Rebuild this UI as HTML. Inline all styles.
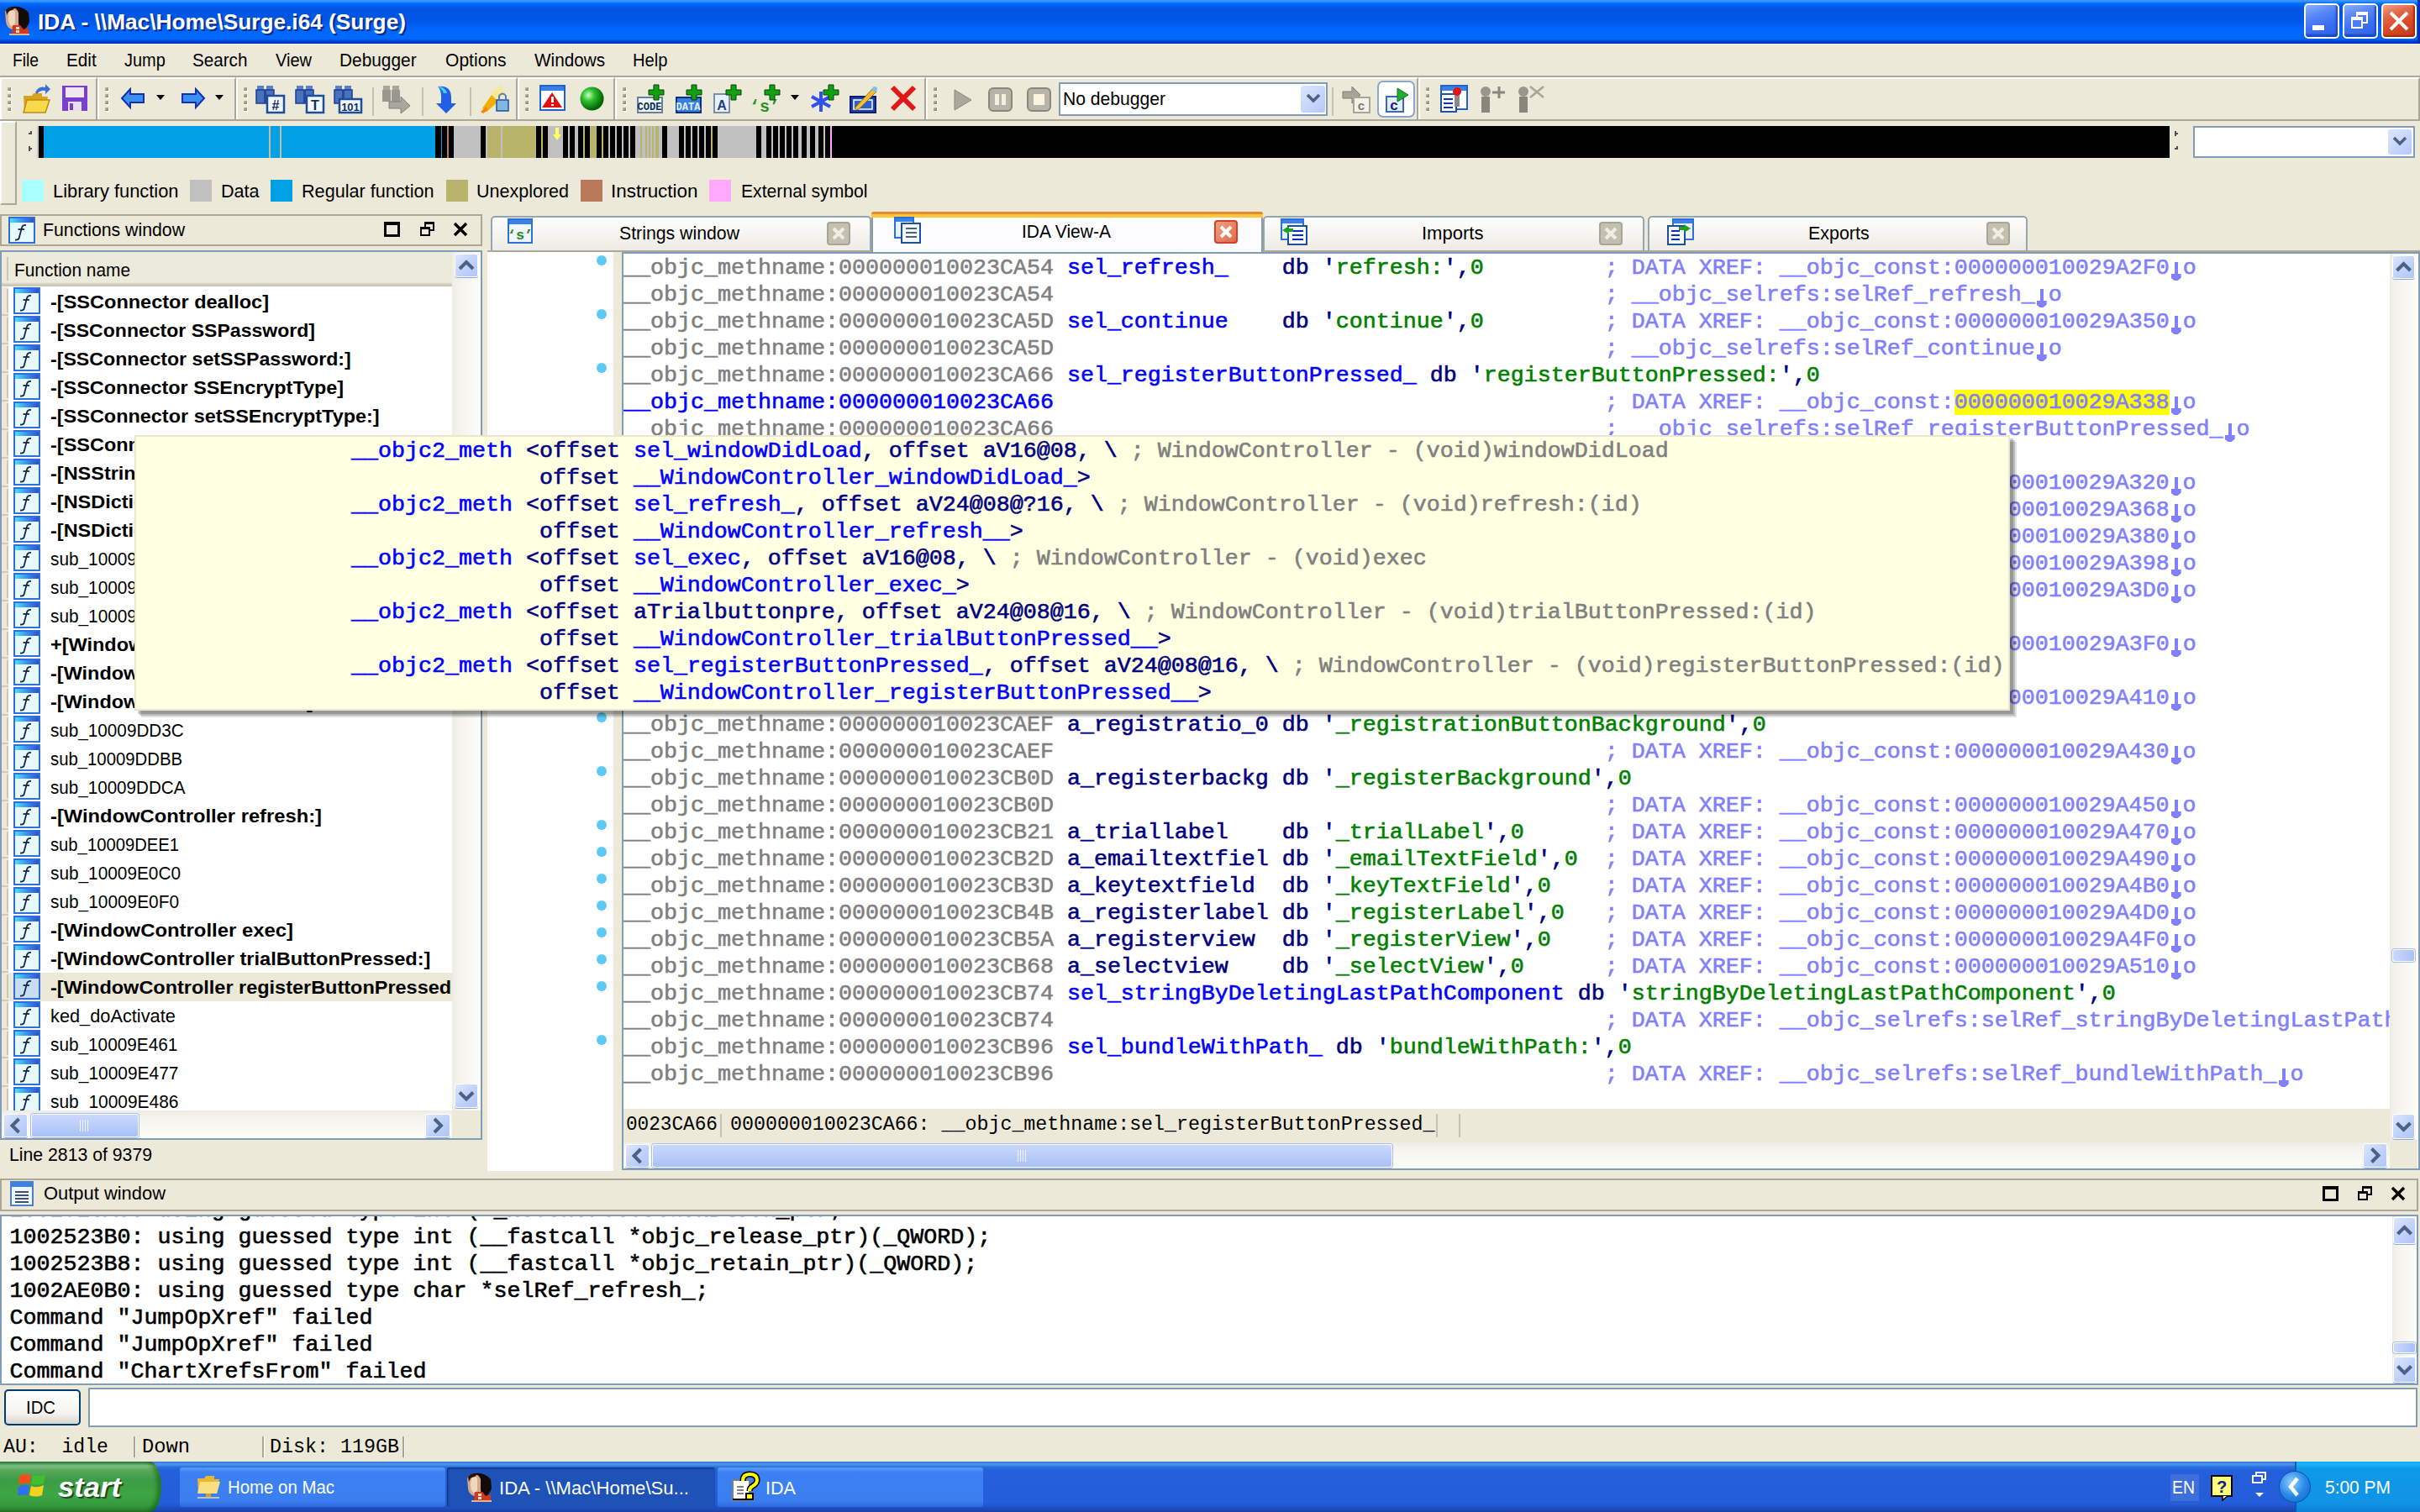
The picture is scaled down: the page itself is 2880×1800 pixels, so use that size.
<!DOCTYPE html><html><head><meta charset="utf-8"><style>
*{margin:0;padding:0;box-sizing:border-box}
html,body{width:2880px;height:1800px;overflow:hidden;background:#ECE9D8;font-family:"Liberation Sans",sans-serif;position:relative}
.a{position:absolute}
.t{position:absolute;white-space:pre;font-family:"Liberation Sans",sans-serif;font-size:22px;line-height:26px;color:#000;transform-origin:0 0}
.m{position:absolute;white-space:pre;font-family:"Liberation Mono",monospace;font-weight:normal;-webkit-text-stroke:0.6px currentColor;font-size:26.667px;line-height:32px;color:#000}
.g{color:#808080}.b{color:#0000FF}.n{color:#000080}.s{color:#008000}.x{color:#8080FF}.k{color:#000}
.hl{background:#FFFF00}
.dn{position:relative}
.dn::before{content:"";position:absolute;left:6px;top:8px;width:4px;height:15px;background:currentColor}
.dn::after{content:"";position:absolute;left:2px;top:22px;width:12px;height:8px;background:currentColor;clip-path:polygon(0 0,100% 0,100% 60%,67% 100%,33% 100%,0 60%)}
svg{position:absolute;overflow:visible}
</style></head><body><div class="a" style="left:0px;top:0px;width:2880px;height:52px;background:linear-gradient(to bottom,#4499FF 0px,#2E8BFF 2px,#006CFF 4px,#0060EC 7px,#0056E2 10px,#0055E3 20px,#005AED 28px,#0064FC 33px,#0068FF 40px,#006AFF 46px,#0050E0 48px,#0030C8 51px)"></div>
<div class="a" style="left:0px;top:52px;width:2880px;height:1px;background:#FFF5DC"></div>
<svg style="left:2px;top:6px" width="34" height="36" viewBox="0 0 34 36">
<path d="M7 4 Q12 1 20 2 Q28 4 32 9 L33 20 Q31 26 26 30 L22 31 L20 20 Z" fill="#140a06"/>
<path d="M4 8 Q6 4 12 3 Q18 3 20 9 L20 24 Q18 29 12 29 Q6 27 5 20 Z" fill="#d4a888"/>
<path d="M9 6 Q13 4 16 8 L16 22 Q14 26 11 25 Q8 22 8 15 Z" fill="#efd8c0"/>
<path d="M5 6 Q9 2 16 3 L13 6 Q8 6 6 12 Z" fill="#2a1408"/>
<path d="M13 24 L22 24 L26 29 L32 27 L32 35 L12 35 Z" fill="#d03820"/>
<rect x="17" y="26" width="4" height="3" fill="#f0e0d0"/><rect x="17" y="30" width="4" height="3" fill="#f0e0d0"/>
<rect x="9" y="34" width="24" height="2" fill="#e0b888"/>
</svg>
<div id="t0" class="t" style="left:45px;top:10.89px;font-size:26px;line-height:31.2px;font-weight:700;color:#fff;font-family:'Liberation Sans',sans-serif;transform:scaleX(1.0094);text-shadow:2px 2px 0 #0a2a8a">IDA - \\Mac\Home\Surge.i64 (Surge)</div>
<div class="a" style="left:2742px;top:4px;width:42px;height:42px;background:linear-gradient(160deg,#90B0FF 0%,#5A88F8 30%,#3C70F2 60%,#2E62E8 100%);border:2px solid #fff;border-radius:5px;box-shadow:inset -2px -3px 2px #1A48C0"></div>
<div class="a" style="left:2752px;top:30px;width:14px;height:6px;background:#fff"></div>
<div class="a" style="left:2788px;top:4px;width:42px;height:42px;background:linear-gradient(160deg,#90B0FF 0%,#5A88F8 30%,#3C70F2 60%,#2E62E8 100%);border:2px solid #fff;border-radius:5px;box-shadow:inset -2px -3px 2px #1A48C0"></div>
<div class="a" style="left:2804px;top:14px;width:14px;height:14px;border:2px solid #fff;border-top-width:4px"></div>
<div class="a" style="left:2798px;top:20px;width:14px;height:14px;border:2px solid #fff;border-top-width:4px;background:#4A7CF4"></div>
<div class="a" style="left:2834px;top:4px;width:42px;height:42px;background:linear-gradient(160deg,#F0A088 0%,#E06848 30%,#D84A28 60%,#C03A18 100%);border:2px solid #fff;border-radius:5px;box-shadow:inset -2px -2px 2px #A02A08"></div>
<svg style="left:2834px;top:4px" width="42" height="42" viewBox="0 0 42 42"><path d="M11 11 L31 31 M31 11 L11 31" stroke="#fff" stroke-width="4"/></svg>
<div class="a" style="left:2877px;top:0px;width:3px;height:52px;background:#0030B0"></div>
<div id="t1" class="t" style="left:15px;top:59.18px;font-size:22px;line-height:26.4px;font-weight:400;color:#000;font-family:'Liberation Sans',sans-serif;transform:scaleX(0.8744);">File</div>
<div id="t2" class="t" style="left:78.6px;top:59.18px;font-size:22px;line-height:26.4px;font-weight:400;color:#000;font-family:'Liberation Sans',sans-serif;transform:scaleX(0.9414);">Edit</div>
<div id="t3" class="t" style="left:147.6px;top:59.18px;font-size:22px;line-height:26.4px;font-weight:400;color:#000;font-family:'Liberation Sans',sans-serif;transform:scaleX(0.9071);">Jump</div>
<div id="t4" class="t" style="left:229px;top:59.18px;font-size:22px;line-height:26.4px;font-weight:400;color:#000;font-family:'Liberation Sans',sans-serif;transform:scaleX(0.9381);">Search</div>
<div id="t5" class="t" style="left:328px;top:59.18px;font-size:22px;line-height:26.4px;font-weight:400;color:#000;font-family:'Liberation Sans',sans-serif;transform:scaleX(0.9092);">View</div>
<div id="t6" class="t" style="left:403.6px;top:59.18px;font-size:22px;line-height:26.4px;font-weight:400;color:#000;font-family:'Liberation Sans',sans-serif;transform:scaleX(0.9478);">Debugger</div>
<div id="t7" class="t" style="left:529.8px;top:59.18px;font-size:22px;line-height:26.4px;font-weight:400;color:#000;font-family:'Liberation Sans',sans-serif;transform:scaleX(0.9574);">Options</div>
<div id="t8" class="t" style="left:636px;top:59.18px;font-size:22px;line-height:26.4px;font-weight:400;color:#000;font-family:'Liberation Sans',sans-serif;transform:scaleX(0.9412);">Windows</div>
<div id="t9" class="t" style="left:753px;top:59.18px;font-size:22px;line-height:26.4px;font-weight:400;color:#000;font-family:'Liberation Sans',sans-serif;transform:scaleX(0.9149);">Help</div>
<div class="a" style="left:0px;top:90px;width:2880px;height:2px;background:#ACA899"></div>
<div class="a" style="left:0px;top:92px;width:116px;height:50px;border-top:2px solid #fff;border-left:2px solid #fff;border-right:2px solid #ACA899"></div>
<div class="a" style="left:116px;top:92px;width:165px;height:50px;border-top:2px solid #fff;border-left:2px solid #fff;border-right:2px solid #ACA899"></div>
<div class="a" style="left:281px;top:92px;width:335px;height:50px;border-top:2px solid #fff;border-left:2px solid #fff;border-right:2px solid #ACA899"></div>
<div class="a" style="left:616px;top:92px;width:116px;height:50px;border-top:2px solid #fff;border-left:2px solid #fff;border-right:2px solid #ACA899"></div>
<div class="a" style="left:732px;top:92px;width:370px;height:50px;border-top:2px solid #fff;border-left:2px solid #fff;border-right:2px solid #ACA899"></div>
<div class="a" style="left:1102px;top:92px;width:586px;height:50px;border-top:2px solid #fff;border-left:2px solid #fff;border-right:2px solid #ACA899"></div>
<div class="a" style="left:1688px;top:92px;width:1192px;height:50px;border-top:2px solid #fff;border-left:2px solid #fff;border-right:2px solid #ACA899"></div>
<div class="a" style="left:0px;top:142px;width:2880px;height:2px;background:#ACA899"></div>
<div class="a" style="left:9px;top:104px;width:4px;height:4px;background:linear-gradient(135deg,#C8C4B4,#7E7A66);box-shadow:1px 1px 0 #fff"></div>
<div class="a" style="left:9px;top:112px;width:4px;height:4px;background:linear-gradient(135deg,#C8C4B4,#7E7A66);box-shadow:1px 1px 0 #fff"></div>
<div class="a" style="left:9px;top:120px;width:4px;height:4px;background:linear-gradient(135deg,#C8C4B4,#7E7A66);box-shadow:1px 1px 0 #fff"></div>
<div class="a" style="left:9px;top:128px;width:4px;height:4px;background:linear-gradient(135deg,#C8C4B4,#7E7A66);box-shadow:1px 1px 0 #fff"></div>
<div class="a" style="left:125px;top:104px;width:4px;height:4px;background:linear-gradient(135deg,#C8C4B4,#7E7A66);box-shadow:1px 1px 0 #fff"></div>
<div class="a" style="left:125px;top:112px;width:4px;height:4px;background:linear-gradient(135deg,#C8C4B4,#7E7A66);box-shadow:1px 1px 0 #fff"></div>
<div class="a" style="left:125px;top:120px;width:4px;height:4px;background:linear-gradient(135deg,#C8C4B4,#7E7A66);box-shadow:1px 1px 0 #fff"></div>
<div class="a" style="left:125px;top:128px;width:4px;height:4px;background:linear-gradient(135deg,#C8C4B4,#7E7A66);box-shadow:1px 1px 0 #fff"></div>
<div class="a" style="left:290px;top:104px;width:4px;height:4px;background:linear-gradient(135deg,#C8C4B4,#7E7A66);box-shadow:1px 1px 0 #fff"></div>
<div class="a" style="left:290px;top:112px;width:4px;height:4px;background:linear-gradient(135deg,#C8C4B4,#7E7A66);box-shadow:1px 1px 0 #fff"></div>
<div class="a" style="left:290px;top:120px;width:4px;height:4px;background:linear-gradient(135deg,#C8C4B4,#7E7A66);box-shadow:1px 1px 0 #fff"></div>
<div class="a" style="left:290px;top:128px;width:4px;height:4px;background:linear-gradient(135deg,#C8C4B4,#7E7A66);box-shadow:1px 1px 0 #fff"></div>
<div class="a" style="left:625px;top:104px;width:4px;height:4px;background:linear-gradient(135deg,#C8C4B4,#7E7A66);box-shadow:1px 1px 0 #fff"></div>
<div class="a" style="left:625px;top:112px;width:4px;height:4px;background:linear-gradient(135deg,#C8C4B4,#7E7A66);box-shadow:1px 1px 0 #fff"></div>
<div class="a" style="left:625px;top:120px;width:4px;height:4px;background:linear-gradient(135deg,#C8C4B4,#7E7A66);box-shadow:1px 1px 0 #fff"></div>
<div class="a" style="left:625px;top:128px;width:4px;height:4px;background:linear-gradient(135deg,#C8C4B4,#7E7A66);box-shadow:1px 1px 0 #fff"></div>
<div class="a" style="left:741px;top:104px;width:4px;height:4px;background:linear-gradient(135deg,#C8C4B4,#7E7A66);box-shadow:1px 1px 0 #fff"></div>
<div class="a" style="left:741px;top:112px;width:4px;height:4px;background:linear-gradient(135deg,#C8C4B4,#7E7A66);box-shadow:1px 1px 0 #fff"></div>
<div class="a" style="left:741px;top:120px;width:4px;height:4px;background:linear-gradient(135deg,#C8C4B4,#7E7A66);box-shadow:1px 1px 0 #fff"></div>
<div class="a" style="left:741px;top:128px;width:4px;height:4px;background:linear-gradient(135deg,#C8C4B4,#7E7A66);box-shadow:1px 1px 0 #fff"></div>
<div class="a" style="left:1111px;top:104px;width:4px;height:4px;background:linear-gradient(135deg,#C8C4B4,#7E7A66);box-shadow:1px 1px 0 #fff"></div>
<div class="a" style="left:1111px;top:112px;width:4px;height:4px;background:linear-gradient(135deg,#C8C4B4,#7E7A66);box-shadow:1px 1px 0 #fff"></div>
<div class="a" style="left:1111px;top:120px;width:4px;height:4px;background:linear-gradient(135deg,#C8C4B4,#7E7A66);box-shadow:1px 1px 0 #fff"></div>
<div class="a" style="left:1111px;top:128px;width:4px;height:4px;background:linear-gradient(135deg,#C8C4B4,#7E7A66);box-shadow:1px 1px 0 #fff"></div>
<div class="a" style="left:1697px;top:104px;width:4px;height:4px;background:linear-gradient(135deg,#C8C4B4,#7E7A66);box-shadow:1px 1px 0 #fff"></div>
<div class="a" style="left:1697px;top:112px;width:4px;height:4px;background:linear-gradient(135deg,#C8C4B4,#7E7A66);box-shadow:1px 1px 0 #fff"></div>
<div class="a" style="left:1697px;top:120px;width:4px;height:4px;background:linear-gradient(135deg,#C8C4B4,#7E7A66);box-shadow:1px 1px 0 #fff"></div>
<div class="a" style="left:1697px;top:128px;width:4px;height:4px;background:linear-gradient(135deg,#C8C4B4,#7E7A66);box-shadow:1px 1px 0 #fff"></div>
<div class="a" style="left:443px;top:104px;width:2px;height:34px;background:#C5C2B2"></div>
<div class="a" style="left:502px;top:104px;width:2px;height:34px;background:#C5C2B2"></div>
<div class="a" style="left:559px;top:104px;width:2px;height:34px;background:#C5C2B2"></div>
<div class="a" style="left:1585px;top:104px;width:2px;height:34px;background:#C5C2B2"></div>
<svg style="left:26px;top:100px" width="34" height="36" viewBox="0 0 34 36"><path d="M2 14 L12 14 L14 11 L24 11 L24 15 L31 15 L27 34 L3 34 Z" fill="#D9A21F"/>
<path d="M6 19 L33 19 L28 34 L2 34 Z" fill="#F7D94A" stroke="#C08A10" stroke-width="1.5"/>
<path d="M16 10 Q20 2 28 4 L28 0 L34 6 L28 12 L28 8 Q22 7 18 12 Z" fill="#3D6FD8"/></svg>
<svg style="left:73px;top:101px" width="32" height="32" viewBox="0 0 32 32"><rect x="1" y="1" width="30" height="30" fill="#7A3FCF"/>
<rect x="5" y="3" width="22" height="12" fill="#F0E8F0"/><rect x="8" y="20" width="16" height="11" fill="#E6E0F0"/><rect x="10" y="22" width="4" height="8" fill="#7A3FCF"/></svg>
<svg style="left:144px;top:104px" width="28" height="26" viewBox="0 0 28 26"><path d="M1 13 L11 2 L11 8 L27 8 L27 18 L11 18 L11 24 Z" fill="#3A8FF0" stroke="#1030B0" stroke-width="2"/></svg>
<svg style="left:186px;top:113px" width="10" height="6" viewBox="0 0 10 6"><path d="M0 0 L10 0 L5 6 Z" fill="#000"/></svg>
<svg style="left:256px;top:113px" width="10" height="6" viewBox="0 0 10 6"><path d="M0 0 L10 0 L5 6 Z" fill="#000"/></svg>
<svg style="left:941px;top:113px" width="10" height="6" viewBox="0 0 10 6"><path d="M0 0 L10 0 L5 6 Z" fill="#000"/></svg>
<svg style="left:216px;top:104px" width="28" height="26" viewBox="0 0 28 26"><path d="M27 13 L17 2 L17 8 L1 8 L1 18 L17 18 L17 24 Z" fill="#3A8FF0" stroke="#1030B0" stroke-width="2"/></svg>
<svg style="left:305px;top:101px" width="34" height="34" viewBox="0 0 34 34"><rect x="1" y="1" width="8" height="6" fill="#5A80C8"/><rect x="12" y="1" width="8" height="6" fill="#5A80C8"/>
<rect x="0" y="6" width="10" height="16" fill="#4A70C0" stroke="#1D3E8A" stroke-width="1.5"/><rect x="11" y="6" width="10" height="16" fill="#4A70C0" stroke="#1D3E8A" stroke-width="1.5"/><rect x="13" y="13" width="20" height="20" fill="#F4F8FF" stroke="#1D4E9A" stroke-width="2.5"/><text x="23" y="30" font-family="Liberation Sans" font-weight="bold" font-size="16" text-anchor="middle" fill="#12305A">#</text></svg>
<svg style="left:352px;top:101px" width="34" height="34" viewBox="0 0 34 34"><rect x="1" y="1" width="8" height="6" fill="#5A80C8"/><rect x="12" y="1" width="8" height="6" fill="#5A80C8"/>
<rect x="0" y="6" width="10" height="16" fill="#4A70C0" stroke="#1D3E8A" stroke-width="1.5"/><rect x="11" y="6" width="10" height="16" fill="#4A70C0" stroke="#1D3E8A" stroke-width="1.5"/><rect x="13" y="13" width="20" height="20" fill="#F4F8FF" stroke="#1D4E9A" stroke-width="2.5"/><text x="23" y="30" font-family="Liberation Sans" font-weight="bold" font-size="16" text-anchor="middle" fill="#12305A">T</text></svg>
<svg style="left:398px;top:101px" width="34" height="34" viewBox="0 0 34 34"><rect x="1" y="1" width="8" height="6" fill="#5A80C8"/><rect x="12" y="1" width="8" height="6" fill="#5A80C8"/>
<rect x="0" y="6" width="10" height="16" fill="#4A70C0" stroke="#1D3E8A" stroke-width="1.5"/><rect x="11" y="6" width="10" height="16" fill="#4A70C0" stroke="#1D3E8A" stroke-width="1.5"/><rect x="6" y="17" width="26" height="16" fill="#F4F8FF" stroke="#1D4E9A" stroke-width="2.5"/><text x="19" y="31" font-family="Liberation Sans" font-weight="bold" font-size="13" text-anchor="middle" fill="#12305A">101</text></svg>
<svg style="left:455px;top:101px" width="34" height="34" viewBox="0 0 34 34"><rect x="1" y="1" width="8" height="6" fill="#A8A8A0"/><rect x="12" y="1" width="8" height="6" fill="#A8A8A0"/>
<rect x="0" y="6" width="10" height="14" fill="#989890"/><rect x="11" y="6" width="10" height="14" fill="#989890"/>
<path d="M8 20 L22 20 L22 14 L33 25 L22 34 L22 28 L8 28 Z" fill="#A8A8A0" stroke="#808078" stroke-width="1"/></svg>
<svg style="left:518px;top:101px" width="26" height="34" viewBox="0 0 26 34"><path d="M3 2 Q18 0 19 14 L19 22 L25 22 L13 34 L1 22 L7 22 L7 14 Q7 6 3 2 Z" fill="#2060E8"/>
<path d="M3 2 Q12 2 14 10 L10 10 Q8 5 3 2 Z" fill="#40D0FF"/></svg>
<svg style="left:571px;top:101px" width="36" height="34" viewBox="0 0 36 34"><path d="M14 8 L26 0 L30 10 L14 24 Z" fill="#F8E890" opacity="0.8"/>
<path d="M3 28 L14 12 L22 20 L8 32 Z" fill="#F0B000"/><path d="M1 32 L8 26 L10 30 L4 34 Z" fill="#FF8000"/>
<rect x="20" y="18" width="14" height="13" fill="#80B8E0" stroke="#2050A0" stroke-width="1.5"/><path d="M23 18 L23 13 Q27 8 31 13 L31 18" stroke="#5080B0" stroke-width="2" fill="none"/></svg>
<svg style="left:642px;top:101px" width="31" height="31" viewBox="0 0 31 31"><rect x="1" y="1" width="29" height="29" fill="#fff" stroke="#2060D0" stroke-width="2"/><rect x="2" y="2" width="27" height="5" fill="#3A80E8"/>
<path d="M15 9 L27 27 L3 27 Z" fill="#E01010"/><rect x="14" y="14" width="3" height="7" fill="#fff"/><rect x="14" y="23" width="3" height="2" fill="#fff"/></svg>
<svg style="left:690px;top:103px" width="29" height="29" viewBox="0 0 29 29"><defs><radialGradient id="gb" cx="35%" cy="35%" r="65%"><stop offset="0" stop-color="#C8FFC0"/><stop offset="0.4" stop-color="#30C030"/><stop offset="1" stop-color="#006000"/></radialGradient></defs><circle cx="14.5" cy="14.5" r="14" fill="url(#gb)"/></svg>
<svg style="left:758px;top:115px" width="31" height="20" viewBox="0 0 31 20"><rect x="1" y="1" width="29" height="18" fill="#F0F4FF" stroke="#6A7FA0" stroke-width="2"/><text x="15" y="16" font-family="Liberation Mono" font-weight="bold" font-size="12" text-anchor="middle" fill="#06304A">CODE</text></svg>
<svg style="left:772px;top:101px" width="18" height="18" viewBox="0 0 18 18"><path d="M6 0 H12 V6 H18 V12 H12 V18 H6 V12 H0 V6 H6 Z" fill="#10A010" stroke="#064006" stroke-width="1"/></svg>
<svg style="left:804px;top:115px" width="31" height="20" viewBox="0 0 31 20"><rect x="1" y="1" width="29" height="18" fill="#3A7FE0" stroke="#0A3080" stroke-width="2"/><text x="15" y="16" font-family="Liberation Mono" font-weight="bold" font-size="12" text-anchor="middle" fill="#E0F0FF">DATA</text></svg>
<svg style="left:817px;top:101px" width="18" height="18" viewBox="0 0 18 18"><path d="M6 0 H12 V6 H18 V12 H12 V18 H6 V12 H0 V6 H6 Z" fill="#10A010" stroke="#064006" stroke-width="1"/></svg>
<svg style="left:849px;top:111px" width="20" height="24" viewBox="0 0 20 24"><rect x="1" y="1" width="18" height="22" fill="#E8F0FF" stroke="#7A8FA8" stroke-width="2"/><text x="10" y="20" font-family="Liberation Sans" font-weight="bold" font-size="16" text-anchor="middle" fill="#20407A">A</text></svg>
<svg style="left:864px;top:101px" width="18" height="18" viewBox="0 0 18 18"><path d="M6 0 H12 V6 H18 V12 H12 V18 H6 V12 H0 V6 H6 Z" fill="#10A010" stroke="#064006" stroke-width="1"/></svg>
<svg style="left:895px;top:113px" width="30" height="22" viewBox="0 0 30 22"><text x="15" y="20" font-family="Liberation Mono" font-weight="bold" font-size="20" text-anchor="middle" fill="#309020">‘s’</text></svg>
<svg style="left:910px;top:101px" width="18" height="18" viewBox="0 0 18 18"><path d="M6 0 H12 V6 H18 V12 H12 V18 H6 V12 H0 V6 H6 Z" fill="#10A010" stroke="#064006" stroke-width="1"/></svg>
<svg style="left:966px;top:109px" width="22" height="24" viewBox="0 0 22 24"><path d="M11 0 V24 M0 6 L22 18 M22 6 L0 18" stroke="#3050F0" stroke-width="4"/></svg>
<svg style="left:980px;top:101px" width="18" height="18" viewBox="0 0 18 18"><path d="M6 0 H12 V6 H18 V12 H12 V18 H6 V12 H0 V6 H6 Z" fill="#10A010" stroke="#064006" stroke-width="1"/></svg>
<svg style="left:1011px;top:101px" width="34" height="34" viewBox="0 0 34 34"><rect x="1" y="14" width="30" height="19" fill="#2040B0" stroke="#0A2070" stroke-width="2"/><rect x="5" y="18" width="22" height="11" fill="#3060D0" stroke="#fff" stroke-width="1.5"/><path d="M6 28 L28 4 L32 8 L10 30 Z" fill="#F0C030" stroke="#A07010" stroke-width="1"/><circle cx="30" cy="5" r="3" fill="#80C0F0"/></svg>
<svg style="left:1059px;top:101px" width="32" height="32" viewBox="0 0 32 32"><path d="M3 3 L29 29 M29 3 L3 29" stroke="#E01818" stroke-width="6"/></svg>
<svg style="left:1135px;top:106px" width="22" height="26" viewBox="0 0 22 26"><path d="M1 1 L21 13 L1 25 Z" fill="#ACA899" stroke="#8A877A" stroke-width="1"/></svg>
<svg style="left:1176px;top:104px" width="29" height="29" viewBox="0 0 29 29"><rect x="1" y="1" width="27" height="27" rx="5" fill="#B8B5A8" stroke="#8A877A" stroke-width="2"/><rect x="8" y="8" width="5" height="13" fill="#F4F0E0"/><rect x="16" y="8" width="5" height="13" fill="#F4F0E0"/></svg>
<svg style="left:1222px;top:104px" width="29" height="29" viewBox="0 0 29 29"><rect x="1" y="1" width="27" height="27" rx="5" fill="#B8B5A8" stroke="#8A877A" stroke-width="2"/><rect x="8" y="8" width="13" height="13" fill="#F8F4E0"/></svg>
<div class="a" style="left:1260px;top:98px;width:320px;height:40px;background:#fff;border:2px solid #7F9DB9"></div>
<div class="a" style="left:1548px;top:102px;width:29px;height:32px;background:linear-gradient(135deg,#DCE6FE,#B4C8F8);border-radius:3px"></div>
<svg style="left:1555px;top:110px" width="16" height="14" viewBox="0 0 16 14"><path d="M1 3 L8 10 L15 3" stroke="#4D6185" stroke-width="3.5" fill="none"/></svg>
<div id="t10" class="t" style="left:1265px;top:105.18px;font-size:22px;line-height:26.4px;font-weight:400;color:#000;font-family:'Liberation Sans',sans-serif;transform:scaleX(0.9590);">No debugger</div>
<svg style="left:1597px;top:101px" width="34" height="34" viewBox="0 0 34 34"><path d="M1 8 L12 8 L12 2 L22 12 L12 22 L12 16 L1 16 Z" fill="#A8A598" stroke="#807D70" stroke-width="1"/><rect x="14" y="15" width="19" height="18" fill="#F4F2E8" stroke="#A8A598" stroke-width="2"/><text x="23" y="30" font-family="Liberation Sans" font-weight="bold" font-size="15" text-anchor="middle" fill="#807D70">c</text></svg>
<div class="a" style="left:1639px;top:96px;width:45px;height:44px;background:#fff;border:2px solid #8CA8CC;border-radius:7px"></div>
<svg style="left:1648px;top:103px" width="30" height="32" viewBox="0 0 30 32"><rect x="2" y="12" width="20" height="18" fill="#E4EEFF" stroke="#3C6AB0" stroke-width="2"/><text x="11" y="28" font-family="Liberation Sans" font-weight="bold" font-size="17" text-anchor="middle" fill="#102080">c</text><path d="M15 2 L28 10 L15 18 Z" fill="#20B030" stroke="#107020" stroke-width="1"/></svg>
<svg style="left:1714px;top:101px" width="33" height="33" viewBox="0 0 33 33"><rect x="1" y="1" width="31" height="28" fill="#fff" stroke="#2060D0" stroke-width="2"/><rect x="2" y="2" width="29" height="5" fill="#3A80E8"/><rect x="1" y="11" width="18" height="21" fill="#fff" stroke="#2050A0" stroke-width="2"/><path d="M4 17 H15 M4 22 H15 M4 27 H15" stroke="#1030C0" stroke-width="2"/><rect x="17" y="12" width="6" height="14" fill="#8A8A8A"/><circle cx="20" cy="8" r="5" fill="#E81010"/></svg>
<svg style="left:1760px;top:101px" width="32" height="33" viewBox="0 0 32 33"><rect x="2" y="2" width="12" height="12" rx="6" fill="#9A978A"/><rect x="3" y="14" width="10" height="19" fill="#8A877A"/><path d="M16 9 H31 M24 2 V16" stroke="#8A877A" stroke-width="3"/></svg>
<svg style="left:1805px;top:101px" width="34" height="33" viewBox="0 0 34 33"><rect x="2" y="2" width="12" height="12" rx="6" fill="#9A978A"/><rect x="3" y="14" width="10" height="19" fill="#8A877A"/><path d="M16 2 L32 15 M32 2 L16 15" stroke="#A8A598" stroke-width="2.5"/></svg>
<div class="a" style="left:0px;top:144px;width:20px;height:100px;border-top:2px solid #fff;border-left:2px solid #fff;border-right:2px solid #ACA899;border-bottom:2px solid #ACA899"></div>
<svg style="left:34px;top:156px" width="4" height="4" viewBox="0 0 4 4"><path d="M2 0 H4 V4 H0 V2 H2 Z" fill="#505050"/></svg>
<svg style="left:34px;top:174px" width="4" height="6" viewBox="0 0 4 6"><path d="M0 0 H2 V2 H4 V4 H2 V6 H0 Z" fill="#505050"/></svg>
<svg style="left:2588px;top:156px" width="4" height="6" viewBox="0 0 4 6"><path d="M0 0 H2 V2 H4 V4 H2 V6 H0 Z" fill="#505050"/></svg>
<svg style="left:2588px;top:174px" width="4" height="4" viewBox="0 0 4 4"><path d="M2 0 H4 V4 H0 V2 H2 Z" fill="#505050"/></svg>
<div class="a" style="left:44px;top:150px;width:1.5px;height:38px;background:#C8C8C8"></div>
<div class="a" style="left:45.5px;top:150px;width:6.5px;height:38px;background:#000"></div>
<div class="a" style="left:52px;top:150px;width:268px;height:38px;background:#00A0E6"></div>
<div class="a" style="left:320px;top:150px;width:2px;height:38px;background:#C8B8A0"></div>
<div class="a" style="left:322px;top:150px;width:11px;height:38px;background:#00A0E6"></div>
<div class="a" style="left:333px;top:150px;width:2px;height:38px;background:#C8B8A0"></div>
<div class="a" style="left:335px;top:150px;width:183px;height:38px;background:#00A0E6"></div>
<div class="a" style="left:518px;top:150px;width:6.6px;height:38px;background:#000"></div>
<div class="a" style="left:524.6px;top:150px;width:1.4px;height:38px;background:#00A0E6"></div>
<div class="a" style="left:526px;top:150px;width:6px;height:38px;background:#000"></div>
<div class="a" style="left:532px;top:150px;width:2px;height:38px;background:#B87A5A"></div>
<div class="a" style="left:534px;top:150px;width:6px;height:38px;background:#000"></div>
<div class="a" style="left:540px;top:150px;width:32px;height:38px;background:#C0C0C0"></div>
<div class="a" style="left:572px;top:150px;width:6px;height:38px;background:#000"></div>
<div class="a" style="left:578px;top:150px;width:2px;height:38px;background:#C0C0C0"></div>
<div class="a" style="left:580px;top:150px;width:16px;height:38px;background:#B8B46C"></div>
<div class="a" style="left:596px;top:150px;width:2px;height:38px;background:#C0C0C0"></div>
<div class="a" style="left:598px;top:150px;width:40px;height:38px;background:#B8B46C"></div>
<div class="a" style="left:638px;top:150px;width:6px;height:38px;background:#000"></div>
<div class="a" style="left:644px;top:150px;width:2px;height:38px;background:#B8B46C"></div>
<div class="a" style="left:646px;top:150px;width:6px;height:38px;background:#000"></div>
<div class="a" style="left:652px;top:150px;width:18px;height:38px;background:#C0C0C0"></div>
<div class="a" style="left:670px;top:150px;width:6px;height:38px;background:#000"></div>
<div class="a" style="left:676px;top:150px;width:2px;height:38px;background:#C0C0C0"></div>
<div class="a" style="left:678px;top:150px;width:6px;height:38px;background:#000"></div>
<div class="a" style="left:684px;top:150px;width:4px;height:38px;background:#C0C0C0"></div>
<div class="a" style="left:688px;top:150px;width:6px;height:38px;background:#000"></div>
<div class="a" style="left:694px;top:150px;width:2px;height:38px;background:#B8B46C"></div>
<div class="a" style="left:696px;top:150px;width:6px;height:38px;background:#000"></div>
<div class="a" style="left:702px;top:150px;width:8px;height:38px;background:#B8B46C"></div>
<div class="a" style="left:710px;top:150px;width:6px;height:38px;background:#000"></div>
<div class="a" style="left:716px;top:150px;width:2px;height:38px;background:#B8B46C"></div>
<div class="a" style="left:718px;top:150px;width:6px;height:38px;background:#000"></div>
<div class="a" style="left:724px;top:150px;width:2px;height:38px;background:#C0C0C0"></div>
<div class="a" style="left:726px;top:150px;width:6px;height:38px;background:#000"></div>
<div class="a" style="left:732px;top:150px;width:2px;height:38px;background:#C0C0C0"></div>
<div class="a" style="left:734px;top:150px;width:6px;height:38px;background:#000"></div>
<div class="a" style="left:740px;top:150px;width:2px;height:38px;background:#C0C0C0"></div>
<div class="a" style="left:742px;top:150px;width:6px;height:38px;background:#000"></div>
<div class="a" style="left:748px;top:150px;width:2px;height:38px;background:#C0C0C0"></div>
<div class="a" style="left:750px;top:150px;width:6px;height:38px;background:#000"></div>
<div class="a" style="left:756px;top:150px;width:6px;height:38px;background:#C0C0C0"></div>
<div class="a" style="left:762px;top:150px;width:2px;height:38px;background:#B8B46C"></div>
<div class="a" style="left:764px;top:150px;width:4px;height:38px;background:#C0C0C0"></div>
<div class="a" style="left:768px;top:150px;width:2px;height:38px;background:#B8B46C"></div>
<div class="a" style="left:770px;top:150px;width:2px;height:38px;background:#C0C0C0"></div>
<div class="a" style="left:772px;top:150px;width:2px;height:38px;background:#B8B46C"></div>
<div class="a" style="left:774px;top:150px;width:2px;height:38px;background:#C0C0C0"></div>
<div class="a" style="left:776px;top:150px;width:2px;height:38px;background:#B8B46C"></div>
<div class="a" style="left:778px;top:150px;width:2px;height:38px;background:#C0C0C0"></div>
<div class="a" style="left:780px;top:150px;width:4px;height:38px;background:#B8B46C"></div>
<div class="a" style="left:784px;top:150px;width:4px;height:38px;background:#C0C0C0"></div>
<div class="a" style="left:788px;top:150px;width:6px;height:38px;background:#000"></div>
<div class="a" style="left:794px;top:150px;width:14px;height:38px;background:#C0C0C0"></div>
<div class="a" style="left:808px;top:150px;width:6px;height:38px;background:#000"></div>
<div class="a" style="left:814px;top:150px;width:2px;height:38px;background:#C0C0C0"></div>
<div class="a" style="left:816px;top:150px;width:6px;height:38px;background:#000"></div>
<div class="a" style="left:822px;top:150px;width:2px;height:38px;background:#C0C0C0"></div>
<div class="a" style="left:824px;top:150px;width:6px;height:38px;background:#000"></div>
<div class="a" style="left:830px;top:150px;width:2px;height:38px;background:#C0C0C0"></div>
<div class="a" style="left:832px;top:150px;width:6px;height:38px;background:#000"></div>
<div class="a" style="left:838px;top:150px;width:2px;height:38px;background:#C0C0C0"></div>
<div class="a" style="left:840px;top:150px;width:6px;height:38px;background:#000"></div>
<div class="a" style="left:846px;top:150px;width:2px;height:38px;background:#B8B46C"></div>
<div class="a" style="left:848px;top:150px;width:6px;height:38px;background:#000"></div>
<div class="a" style="left:854px;top:150px;width:46px;height:38px;background:#C0C0C0"></div>
<div class="a" style="left:900px;top:150px;width:6px;height:38px;background:#000"></div>
<div class="a" style="left:906px;top:150px;width:6px;height:38px;background:#C0C0C0"></div>
<div class="a" style="left:912px;top:150px;width:6px;height:38px;background:#000"></div>
<div class="a" style="left:918px;top:150px;width:2px;height:38px;background:#C0C0C0"></div>
<div class="a" style="left:920px;top:150px;width:6px;height:38px;background:#000"></div>
<div class="a" style="left:926px;top:150px;width:2px;height:38px;background:#C0C0C0"></div>
<div class="a" style="left:928px;top:150px;width:6px;height:38px;background:#000"></div>
<div class="a" style="left:934px;top:150px;width:2px;height:38px;background:#C0C0C0"></div>
<div class="a" style="left:936px;top:150px;width:6px;height:38px;background:#000"></div>
<div class="a" style="left:942px;top:150px;width:2px;height:38px;background:#C0C0C0"></div>
<div class="a" style="left:944px;top:150px;width:6px;height:38px;background:#000"></div>
<div class="a" style="left:950px;top:150px;width:4px;height:38px;background:#C0C0C0"></div>
<div class="a" style="left:954px;top:150px;width:6px;height:38px;background:#000"></div>
<div class="a" style="left:960px;top:150px;width:4px;height:38px;background:#C0C0C0"></div>
<div class="a" style="left:964px;top:150px;width:6px;height:38px;background:#000"></div>
<div class="a" style="left:970px;top:150px;width:4px;height:38px;background:#C0C0C0"></div>
<div class="a" style="left:974px;top:150px;width:6px;height:38px;background:#000"></div>
<div class="a" style="left:980px;top:150px;width:2px;height:38px;background:#C0C0C0"></div>
<div class="a" style="left:982px;top:150px;width:6px;height:38px;background:#000"></div>
<div class="a" style="left:988px;top:150px;width:2px;height:38px;background:#FFAAFF"></div>
<div class="a" style="left:990px;top:150px;width:1592px;height:38px;background:#000"></div>
<svg style="left:658px;top:152px" width="10" height="15" viewBox="0 0 10 15"><path d="M3 0 H7 V8 H10 L5 15 L0 8 H3 Z" fill="#FFFF60"/></svg>
<div class="a" style="left:2610px;top:150px;width:264px;height:38px;background:#fff;border:2px solid #7F9DB9"></div>
<div class="a" style="left:2842px;top:154px;width:28px;height:30px;background:linear-gradient(135deg,#DCE6FE,#B4C8F8);border-radius:3px"></div>
<svg style="left:2848px;top:161px" width="16" height="14" viewBox="0 0 16 14"><path d="M1 3 L8 10 L15 3" stroke="#4D6185" stroke-width="3.5" fill="none"/></svg>
<div class="a" style="left:26px;top:214px;width:26px;height:26px;background:#AAFFFF"></div>
<div id="t11" class="t" style="left:62.7px;top:215.18px;font-size:22px;line-height:26.4px;font-weight:400;color:#000;font-family:'Liberation Sans',sans-serif;transform:scaleX(0.9939);">Library function</div>
<div class="a" style="left:226px;top:214px;width:26px;height:26px;background:#C0C0C0"></div>
<div id="t12" class="t" style="left:263px;top:215.18px;font-size:22px;line-height:26.4px;font-weight:400;color:#000;font-family:'Liberation Sans',sans-serif;transform:scaleX(0.9810);">Data</div>
<div class="a" style="left:322px;top:214px;width:26px;height:26px;background:#00A0E6"></div>
<div id="t13" class="t" style="left:359px;top:215.18px;font-size:22px;line-height:26.4px;font-weight:400;color:#000;font-family:'Liberation Sans',sans-serif;transform:scaleX(0.9830);">Regular function</div>
<div class="a" style="left:530.5px;top:214px;width:26px;height:26px;background:#B8B46C"></div>
<div id="t14" class="t" style="left:566.7px;top:215.18px;font-size:22px;line-height:26.4px;font-weight:400;color:#000;font-family:'Liberation Sans',sans-serif;transform:scaleX(0.9776);">Unexplored</div>
<div class="a" style="left:690.5px;top:214px;width:26px;height:26px;background:#B87A5A"></div>
<div id="t15" class="t" style="left:727px;top:215.18px;font-size:22px;line-height:26.4px;font-weight:400;color:#000;font-family:'Liberation Sans',sans-serif;transform:scaleX(1.0197);">Instruction</div>
<div class="a" style="left:844px;top:214px;width:26px;height:26px;background:#FFAAFF"></div>
<div id="t16" class="t" style="left:881.5px;top:215.18px;font-size:22px;line-height:26.4px;font-weight:400;color:#000;font-family:'Liberation Sans',sans-serif;transform:scaleX(0.9616);">External symbol</div>
<div class="a" style="left:0px;top:255px;width:574px;height:38px;border:2px solid #ACA899;background:#ECE9D8"></div>
<svg style="left:0;top:0" width="0" height="0"><defs><linearGradient id="fti" x1="0" x2="1"><stop offset="0" stop-color="#50E0FF"/><stop offset="0.5" stop-color="#3A90F0"/><stop offset="1" stop-color="#3050D0"/></linearGradient></defs></svg>
<svg style="left:10px;top:258px" width="32" height="32" viewBox="0 0 32 32"><rect x="1" y="1" width="30" height="30" fill="#E6FAFF" stroke="#2F6FD8" stroke-width="2"/><rect x="2" y="2" width="28" height="5" fill="url(#fti)"/>
<path d="M21 10 Q17 9.5 16 13 L12.5 26 Q11.5 28 8 27.5" stroke="#182848" stroke-width="1.8" fill="none"/><path d="M11.5 15 H19" stroke="#182848" stroke-width="1.8"/></svg>
<div id="t17" class="t" style="left:51px;top:260.68px;font-size:22px;line-height:26.4px;font-weight:400;color:#000;font-family:'Liberation Sans',sans-serif;transform:scaleX(0.9664);">Functions window</div>
<div class="a" style="left:457px;top:264px;width:19px;height:18px;border:3px solid #000;border-top-width:4px"></div>
<div class="a" style="left:505px;top:264px;width:12px;height:11px;border:2px solid #000;border-top-width:3px"></div>
<div class="a" style="left:500px;top:270px;width:12px;height:11px;border:2px solid #000;border-top-width:3px;background:#ECE9D8"></div>
<svg style="left:539px;top:265px" width="18" height="16" viewBox="0 0 18 16"><path d="M2 1 L16 15 M16 1 L2 15" stroke="#000" stroke-width="3.5"/></svg>
<div class="a" style="left:0px;top:298px;width:574px;height:1059px;border:2px solid #7F9DB9;background:#fff"></div>
<div class="a" style="left:2px;top:300px;width:536px;height:41px;background:linear-gradient(to bottom,#EBEADB 0px,#EBEADB 36px,#D6D2C2 38px,#C5C1B0 41px)"></div>
<div class="a" style="left:8px;top:306px;width:2px;height:28px;background:#CBC7B8"></div>
<div id="t18" class="t" style="left:17.4px;top:308.68px;font-size:22px;line-height:26.4px;font-weight:400;color:#000;font-family:'Liberation Sans',sans-serif;transform:scaleX(0.9482);">Function name</div>
<div class="a" style="left:2px;top:341px;width:536px;height:981px;overflow:hidden">
<div class="a" style="left:0px;top:1px;width:8px;height:34px;background:#ECE9D8"></div>
<div class="a" style="left:0px;top:33px;width:8px;height:2px;background:#D0CCBC"></div>
<div class="a" style="left:6px;top:3px;width:2px;height:28px;background:#CBC7B8"></div>
<svg style="left:14px;top:1px" width="32" height="32" viewBox="0 0 32 32"><rect x="1" y="1" width="30" height="30" fill="#E6FAFF" stroke="#2F6FD8" stroke-width="2"/><rect x="2" y="2" width="28" height="5" fill="url(#fti)"/>
<path d="M21 10 Q17 9.5 16 13 L12.5 26 Q11.5 28 8 27.5" stroke="#182848" stroke-width="1.8" fill="none"/><path d="M11.5 15 H19" stroke="#182848" stroke-width="1.8"/></svg>
<div id="t19" class="t" style="left:57.5px;top:6.18px;font-size:22px;line-height:26.4px;font-weight:700;color:#000;font-family:'Liberation Sans',sans-serif;transform:scaleX(1.0689);">-[SSConnector dealloc]</div>
<div class="a" style="left:0px;top:35px;width:8px;height:34px;background:#ECE9D8"></div>
<div class="a" style="left:0px;top:67px;width:8px;height:2px;background:#D0CCBC"></div>
<div class="a" style="left:6px;top:37px;width:2px;height:28px;background:#CBC7B8"></div>
<svg style="left:14px;top:35px" width="32" height="32" viewBox="0 0 32 32"><rect x="1" y="1" width="30" height="30" fill="#E6FAFF" stroke="#2F6FD8" stroke-width="2"/><rect x="2" y="2" width="28" height="5" fill="url(#fti)"/>
<path d="M21 10 Q17 9.5 16 13 L12.5 26 Q11.5 28 8 27.5" stroke="#182848" stroke-width="1.8" fill="none"/><path d="M11.5 15 H19" stroke="#182848" stroke-width="1.8"/></svg>
<div id="t20" class="t" style="left:57.5px;top:40.18px;font-size:22px;line-height:26.4px;font-weight:700;color:#000;font-family:'Liberation Sans',sans-serif;transform:scaleX(1.0475);">-[SSConnector SSPassword]</div>
<div class="a" style="left:0px;top:69px;width:8px;height:34px;background:#ECE9D8"></div>
<div class="a" style="left:0px;top:101px;width:8px;height:2px;background:#D0CCBC"></div>
<div class="a" style="left:6px;top:71px;width:2px;height:28px;background:#CBC7B8"></div>
<svg style="left:14px;top:69px" width="32" height="32" viewBox="0 0 32 32"><rect x="1" y="1" width="30" height="30" fill="#E6FAFF" stroke="#2F6FD8" stroke-width="2"/><rect x="2" y="2" width="28" height="5" fill="url(#fti)"/>
<path d="M21 10 Q17 9.5 16 13 L12.5 26 Q11.5 28 8 27.5" stroke="#182848" stroke-width="1.8" fill="none"/><path d="M11.5 15 H19" stroke="#182848" stroke-width="1.8"/></svg>
<div id="t21" class="t" style="left:57.5px;top:74.18px;font-size:22px;line-height:26.4px;font-weight:700;color:#000;font-family:'Liberation Sans',sans-serif;transform:scaleX(1.0528);">-[SSConnector setSSPassword:]</div>
<div class="a" style="left:0px;top:103px;width:8px;height:34px;background:#ECE9D8"></div>
<div class="a" style="left:0px;top:135px;width:8px;height:2px;background:#D0CCBC"></div>
<div class="a" style="left:6px;top:105px;width:2px;height:28px;background:#CBC7B8"></div>
<svg style="left:14px;top:103px" width="32" height="32" viewBox="0 0 32 32"><rect x="1" y="1" width="30" height="30" fill="#E6FAFF" stroke="#2F6FD8" stroke-width="2"/><rect x="2" y="2" width="28" height="5" fill="url(#fti)"/>
<path d="M21 10 Q17 9.5 16 13 L12.5 26 Q11.5 28 8 27.5" stroke="#182848" stroke-width="1.8" fill="none"/><path d="M11.5 15 H19" stroke="#182848" stroke-width="1.8"/></svg>
<div id="t22" class="t" style="left:57.5px;top:108.18px;font-size:22px;line-height:26.4px;font-weight:700;color:#000;font-family:'Liberation Sans',sans-serif;transform:scaleX(1.0627);">-[SSConnector SSEncryptType]</div>
<div class="a" style="left:0px;top:137px;width:8px;height:34px;background:#ECE9D8"></div>
<div class="a" style="left:0px;top:169px;width:8px;height:2px;background:#D0CCBC"></div>
<div class="a" style="left:6px;top:139px;width:2px;height:28px;background:#CBC7B8"></div>
<svg style="left:14px;top:137px" width="32" height="32" viewBox="0 0 32 32"><rect x="1" y="1" width="30" height="30" fill="#E6FAFF" stroke="#2F6FD8" stroke-width="2"/><rect x="2" y="2" width="28" height="5" fill="url(#fti)"/>
<path d="M21 10 Q17 9.5 16 13 L12.5 26 Q11.5 28 8 27.5" stroke="#182848" stroke-width="1.8" fill="none"/><path d="M11.5 15 H19" stroke="#182848" stroke-width="1.8"/></svg>
<div id="t23" class="t" style="left:57.5px;top:142.18px;font-size:22px;line-height:26.4px;font-weight:700;color:#000;font-family:'Liberation Sans',sans-serif;transform:scaleX(1.0657);">-[SSConnector setSSEncryptType:]</div>
<div class="a" style="left:0px;top:171px;width:8px;height:34px;background:#ECE9D8"></div>
<div class="a" style="left:0px;top:203px;width:8px;height:2px;background:#D0CCBC"></div>
<div class="a" style="left:6px;top:173px;width:2px;height:28px;background:#CBC7B8"></div>
<svg style="left:14px;top:171px" width="32" height="32" viewBox="0 0 32 32"><rect x="1" y="1" width="30" height="30" fill="#E6FAFF" stroke="#2F6FD8" stroke-width="2"/><rect x="2" y="2" width="28" height="5" fill="url(#fti)"/>
<path d="M21 10 Q17 9.5 16 13 L12.5 26 Q11.5 28 8 27.5" stroke="#182848" stroke-width="1.8" fill="none"/><path d="M11.5 15 H19" stroke="#182848" stroke-width="1.8"/></svg>
<div id="t24" class="t" style="left:57.5px;top:176.18px;font-size:22px;line-height:26.4px;font-weight:700;color:#000;font-family:'Liberation Sans',sans-serif;transform:scaleX(1.0670);">-[SSConnector setSSEncryptType]</div>
<div class="a" style="left:0px;top:205px;width:8px;height:34px;background:#ECE9D8"></div>
<div class="a" style="left:0px;top:237px;width:8px;height:2px;background:#D0CCBC"></div>
<div class="a" style="left:6px;top:207px;width:2px;height:28px;background:#CBC7B8"></div>
<svg style="left:14px;top:205px" width="32" height="32" viewBox="0 0 32 32"><rect x="1" y="1" width="30" height="30" fill="#E6FAFF" stroke="#2F6FD8" stroke-width="2"/><rect x="2" y="2" width="28" height="5" fill="url(#fti)"/>
<path d="M21 10 Q17 9.5 16 13 L12.5 26 Q11.5 28 8 27.5" stroke="#182848" stroke-width="1.8" fill="none"/><path d="M11.5 15 H19" stroke="#182848" stroke-width="1.8"/></svg>
<div id="t25" class="t" style="left:57.5px;top:210.18px;font-size:22px;line-height:26.4px;font-weight:700;color:#000;font-family:'Liberation Sans',sans-serif;transform:scaleX(1.0670);">-[NSString(URLEncoding) urlEncode]</div>
<div class="a" style="left:0px;top:239px;width:8px;height:34px;background:#ECE9D8"></div>
<div class="a" style="left:0px;top:271px;width:8px;height:2px;background:#D0CCBC"></div>
<div class="a" style="left:6px;top:241px;width:2px;height:28px;background:#CBC7B8"></div>
<svg style="left:14px;top:239px" width="32" height="32" viewBox="0 0 32 32"><rect x="1" y="1" width="30" height="30" fill="#E6FAFF" stroke="#2F6FD8" stroke-width="2"/><rect x="2" y="2" width="28" height="5" fill="url(#fti)"/>
<path d="M21 10 Q17 9.5 16 13 L12.5 26 Q11.5 28 8 27.5" stroke="#182848" stroke-width="1.8" fill="none"/><path d="M11.5 15 H19" stroke="#182848" stroke-width="1.8"/></svg>
<div id="t26" class="t" style="left:57.5px;top:244.18px;font-size:22px;line-height:26.4px;font-weight:700;color:#000;font-family:'Liberation Sans',sans-serif;transform:scaleX(1.0670);">-[NSDictionary(JSON) json]</div>
<div class="a" style="left:0px;top:273px;width:8px;height:34px;background:#ECE9D8"></div>
<div class="a" style="left:0px;top:305px;width:8px;height:2px;background:#D0CCBC"></div>
<div class="a" style="left:6px;top:275px;width:2px;height:28px;background:#CBC7B8"></div>
<svg style="left:14px;top:273px" width="32" height="32" viewBox="0 0 32 32"><rect x="1" y="1" width="30" height="30" fill="#E6FAFF" stroke="#2F6FD8" stroke-width="2"/><rect x="2" y="2" width="28" height="5" fill="url(#fti)"/>
<path d="M21 10 Q17 9.5 16 13 L12.5 26 Q11.5 28 8 27.5" stroke="#182848" stroke-width="1.8" fill="none"/><path d="M11.5 15 H19" stroke="#182848" stroke-width="1.8"/></svg>
<div id="t27" class="t" style="left:57.5px;top:278.18px;font-size:22px;line-height:26.4px;font-weight:700;color:#000;font-family:'Liberation Sans',sans-serif;transform:scaleX(1.0670);">-[NSDictionary(URL) queryString]</div>
<div class="a" style="left:0px;top:307px;width:8px;height:34px;background:#ECE9D8"></div>
<div class="a" style="left:0px;top:339px;width:8px;height:2px;background:#D0CCBC"></div>
<div class="a" style="left:6px;top:309px;width:2px;height:28px;background:#CBC7B8"></div>
<svg style="left:14px;top:307px" width="32" height="32" viewBox="0 0 32 32"><rect x="1" y="1" width="30" height="30" fill="#E6FAFF" stroke="#2F6FD8" stroke-width="2"/><rect x="2" y="2" width="28" height="5" fill="url(#fti)"/>
<path d="M21 10 Q17 9.5 16 13 L12.5 26 Q11.5 28 8 27.5" stroke="#182848" stroke-width="1.8" fill="none"/><path d="M11.5 15 H19" stroke="#182848" stroke-width="1.8"/></svg>
<div id="t28" class="t" style="left:57.5px;top:312.18px;font-size:22px;line-height:26.4px;font-weight:400;color:#000;font-family:'Liberation Sans',sans-serif;transform:scaleX(0.9450);">sub_10009D9F0</div>
<div class="a" style="left:0px;top:341px;width:8px;height:34px;background:#ECE9D8"></div>
<div class="a" style="left:0px;top:373px;width:8px;height:2px;background:#D0CCBC"></div>
<div class="a" style="left:6px;top:343px;width:2px;height:28px;background:#CBC7B8"></div>
<svg style="left:14px;top:341px" width="32" height="32" viewBox="0 0 32 32"><rect x="1" y="1" width="30" height="30" fill="#E6FAFF" stroke="#2F6FD8" stroke-width="2"/><rect x="2" y="2" width="28" height="5" fill="url(#fti)"/>
<path d="M21 10 Q17 9.5 16 13 L12.5 26 Q11.5 28 8 27.5" stroke="#182848" stroke-width="1.8" fill="none"/><path d="M11.5 15 H19" stroke="#182848" stroke-width="1.8"/></svg>
<div id="t29" class="t" style="left:57.5px;top:346.18px;font-size:22px;line-height:26.4px;font-weight:400;color:#000;font-family:'Liberation Sans',sans-serif;transform:scaleX(0.9450);">sub_10009DA6F</div>
<div class="a" style="left:0px;top:375px;width:8px;height:34px;background:#ECE9D8"></div>
<div class="a" style="left:0px;top:407px;width:8px;height:2px;background:#D0CCBC"></div>
<div class="a" style="left:6px;top:377px;width:2px;height:28px;background:#CBC7B8"></div>
<svg style="left:14px;top:375px" width="32" height="32" viewBox="0 0 32 32"><rect x="1" y="1" width="30" height="30" fill="#E6FAFF" stroke="#2F6FD8" stroke-width="2"/><rect x="2" y="2" width="28" height="5" fill="url(#fti)"/>
<path d="M21 10 Q17 9.5 16 13 L12.5 26 Q11.5 28 8 27.5" stroke="#182848" stroke-width="1.8" fill="none"/><path d="M11.5 15 H19" stroke="#182848" stroke-width="1.8"/></svg>
<div id="t30" class="t" style="left:57.5px;top:380.18px;font-size:22px;line-height:26.4px;font-weight:400;color:#000;font-family:'Liberation Sans',sans-serif;transform:scaleX(0.9450);">sub_10009DB0E</div>
<div class="a" style="left:0px;top:409px;width:8px;height:34px;background:#ECE9D8"></div>
<div class="a" style="left:0px;top:441px;width:8px;height:2px;background:#D0CCBC"></div>
<div class="a" style="left:6px;top:411px;width:2px;height:28px;background:#CBC7B8"></div>
<svg style="left:14px;top:409px" width="32" height="32" viewBox="0 0 32 32"><rect x="1" y="1" width="30" height="30" fill="#E6FAFF" stroke="#2F6FD8" stroke-width="2"/><rect x="2" y="2" width="28" height="5" fill="url(#fti)"/>
<path d="M21 10 Q17 9.5 16 13 L12.5 26 Q11.5 28 8 27.5" stroke="#182848" stroke-width="1.8" fill="none"/><path d="M11.5 15 H19" stroke="#182848" stroke-width="1.8"/></svg>
<div id="t31" class="t" style="left:57.5px;top:414.18px;font-size:22px;line-height:26.4px;font-weight:700;color:#000;font-family:'Liberation Sans',sans-serif;transform:scaleX(1.0670);">+[WindowController sharedController]</div>
<div class="a" style="left:0px;top:443px;width:8px;height:34px;background:#ECE9D8"></div>
<div class="a" style="left:0px;top:475px;width:8px;height:2px;background:#D0CCBC"></div>
<div class="a" style="left:6px;top:445px;width:2px;height:28px;background:#CBC7B8"></div>
<svg style="left:14px;top:443px" width="32" height="32" viewBox="0 0 32 32"><rect x="1" y="1" width="30" height="30" fill="#E6FAFF" stroke="#2F6FD8" stroke-width="2"/><rect x="2" y="2" width="28" height="5" fill="url(#fti)"/>
<path d="M21 10 Q17 9.5 16 13 L12.5 26 Q11.5 28 8 27.5" stroke="#182848" stroke-width="1.8" fill="none"/><path d="M11.5 15 H19" stroke="#182848" stroke-width="1.8"/></svg>
<div id="t32" class="t" style="left:57.5px;top:448.18px;font-size:22px;line-height:26.4px;font-weight:700;color:#000;font-family:'Liberation Sans',sans-serif;transform:scaleX(1.0670);">-[WindowController windowDidLoad]</div>
<div class="a" style="left:0px;top:477px;width:8px;height:34px;background:#ECE9D8"></div>
<div class="a" style="left:0px;top:509px;width:8px;height:2px;background:#D0CCBC"></div>
<div class="a" style="left:6px;top:479px;width:2px;height:28px;background:#CBC7B8"></div>
<svg style="left:14px;top:477px" width="32" height="32" viewBox="0 0 32 32"><rect x="1" y="1" width="30" height="30" fill="#E6FAFF" stroke="#2F6FD8" stroke-width="2"/><rect x="2" y="2" width="28" height="5" fill="url(#fti)"/>
<path d="M21 10 Q17 9.5 16 13 L12.5 26 Q11.5 28 8 27.5" stroke="#182848" stroke-width="1.8" fill="none"/><path d="M11.5 15 H19" stroke="#182848" stroke-width="1.8"/></svg>
<div id="t33" class="t" style="left:57.5px;top:482.18px;font-size:22px;line-height:26.4px;font-weight:700;color:#000;font-family:'Liberation Sans',sans-serif;transform:scaleX(1.0670);">-[WindowController dealloc]</div>
<div class="a" style="left:0px;top:511px;width:8px;height:34px;background:#ECE9D8"></div>
<div class="a" style="left:0px;top:543px;width:8px;height:2px;background:#D0CCBC"></div>
<div class="a" style="left:6px;top:513px;width:2px;height:28px;background:#CBC7B8"></div>
<svg style="left:14px;top:511px" width="32" height="32" viewBox="0 0 32 32"><rect x="1" y="1" width="30" height="30" fill="#E6FAFF" stroke="#2F6FD8" stroke-width="2"/><rect x="2" y="2" width="28" height="5" fill="url(#fti)"/>
<path d="M21 10 Q17 9.5 16 13 L12.5 26 Q11.5 28 8 27.5" stroke="#182848" stroke-width="1.8" fill="none"/><path d="M11.5 15 H19" stroke="#182848" stroke-width="1.8"/></svg>
<div id="t34" class="t" style="left:57.5px;top:516.18px;font-size:22px;line-height:26.4px;font-weight:400;color:#000;font-family:'Liberation Sans',sans-serif;transform:scaleX(0.9403);">sub_10009DD3C</div>
<div class="a" style="left:0px;top:545px;width:8px;height:34px;background:#ECE9D8"></div>
<div class="a" style="left:0px;top:577px;width:8px;height:2px;background:#D0CCBC"></div>
<div class="a" style="left:6px;top:547px;width:2px;height:28px;background:#CBC7B8"></div>
<svg style="left:14px;top:545px" width="32" height="32" viewBox="0 0 32 32"><rect x="1" y="1" width="30" height="30" fill="#E6FAFF" stroke="#2F6FD8" stroke-width="2"/><rect x="2" y="2" width="28" height="5" fill="url(#fti)"/>
<path d="M21 10 Q17 9.5 16 13 L12.5 26 Q11.5 28 8 27.5" stroke="#182848" stroke-width="1.8" fill="none"/><path d="M11.5 15 H19" stroke="#182848" stroke-width="1.8"/></svg>
<div id="t35" class="t" style="left:57.5px;top:550.18px;font-size:22px;line-height:26.4px;font-weight:400;color:#000;font-family:'Liberation Sans',sans-serif;transform:scaleX(0.9234);">sub_10009DDBB</div>
<div class="a" style="left:0px;top:579px;width:8px;height:34px;background:#ECE9D8"></div>
<div class="a" style="left:0px;top:611px;width:8px;height:2px;background:#D0CCBC"></div>
<div class="a" style="left:6px;top:581px;width:2px;height:28px;background:#CBC7B8"></div>
<svg style="left:14px;top:579px" width="32" height="32" viewBox="0 0 32 32"><rect x="1" y="1" width="30" height="30" fill="#E6FAFF" stroke="#2F6FD8" stroke-width="2"/><rect x="2" y="2" width="28" height="5" fill="url(#fti)"/>
<path d="M21 10 Q17 9.5 16 13 L12.5 26 Q11.5 28 8 27.5" stroke="#182848" stroke-width="1.8" fill="none"/><path d="M11.5 15 H19" stroke="#182848" stroke-width="1.8"/></svg>
<div id="t36" class="t" style="left:57.5px;top:584.18px;font-size:22px;line-height:26.4px;font-weight:400;color:#000;font-family:'Liberation Sans',sans-serif;transform:scaleX(0.9373);">sub_10009DDCA</div>
<div class="a" style="left:0px;top:613px;width:8px;height:34px;background:#ECE9D8"></div>
<div class="a" style="left:0px;top:645px;width:8px;height:2px;background:#D0CCBC"></div>
<div class="a" style="left:6px;top:615px;width:2px;height:28px;background:#CBC7B8"></div>
<svg style="left:14px;top:613px" width="32" height="32" viewBox="0 0 32 32"><rect x="1" y="1" width="30" height="30" fill="#E6FAFF" stroke="#2F6FD8" stroke-width="2"/><rect x="2" y="2" width="28" height="5" fill="url(#fti)"/>
<path d="M21 10 Q17 9.5 16 13 L12.5 26 Q11.5 28 8 27.5" stroke="#182848" stroke-width="1.8" fill="none"/><path d="M11.5 15 H19" stroke="#182848" stroke-width="1.8"/></svg>
<div id="t37" class="t" style="left:57.5px;top:618.18px;font-size:22px;line-height:26.4px;font-weight:700;color:#000;font-family:'Liberation Sans',sans-serif;transform:scaleX(1.0794);">-[WindowController refresh:]</div>
<div class="a" style="left:0px;top:647px;width:8px;height:34px;background:#ECE9D8"></div>
<div class="a" style="left:0px;top:679px;width:8px;height:2px;background:#D0CCBC"></div>
<div class="a" style="left:6px;top:649px;width:2px;height:28px;background:#CBC7B8"></div>
<svg style="left:14px;top:647px" width="32" height="32" viewBox="0 0 32 32"><rect x="1" y="1" width="30" height="30" fill="#E6FAFF" stroke="#2F6FD8" stroke-width="2"/><rect x="2" y="2" width="28" height="5" fill="url(#fti)"/>
<path d="M21 10 Q17 9.5 16 13 L12.5 26 Q11.5 28 8 27.5" stroke="#182848" stroke-width="1.8" fill="none"/><path d="M11.5 15 H19" stroke="#182848" stroke-width="1.8"/></svg>
<div id="t38" class="t" style="left:57.5px;top:652.18px;font-size:22px;line-height:26.4px;font-weight:400;color:#000;font-family:'Liberation Sans',sans-serif;transform:scaleX(0.9197);">sub_10009DEE1</div>
<div class="a" style="left:0px;top:681px;width:8px;height:34px;background:#ECE9D8"></div>
<div class="a" style="left:0px;top:713px;width:8px;height:2px;background:#D0CCBC"></div>
<div class="a" style="left:6px;top:683px;width:2px;height:28px;background:#CBC7B8"></div>
<svg style="left:14px;top:681px" width="32" height="32" viewBox="0 0 32 32"><rect x="1" y="1" width="30" height="30" fill="#E6FAFF" stroke="#2F6FD8" stroke-width="2"/><rect x="2" y="2" width="28" height="5" fill="url(#fti)"/>
<path d="M21 10 Q17 9.5 16 13 L12.5 26 Q11.5 28 8 27.5" stroke="#182848" stroke-width="1.8" fill="none"/><path d="M11.5 15 H19" stroke="#182848" stroke-width="1.8"/></svg>
<div id="t39" class="t" style="left:57.5px;top:686.18px;font-size:22px;line-height:26.4px;font-weight:400;color:#000;font-family:'Liberation Sans',sans-serif;transform:scaleX(0.9456);">sub_10009E0C0</div>
<div class="a" style="left:0px;top:715px;width:8px;height:34px;background:#ECE9D8"></div>
<div class="a" style="left:0px;top:747px;width:8px;height:2px;background:#D0CCBC"></div>
<div class="a" style="left:6px;top:717px;width:2px;height:28px;background:#CBC7B8"></div>
<svg style="left:14px;top:715px" width="32" height="32" viewBox="0 0 32 32"><rect x="1" y="1" width="30" height="30" fill="#E6FAFF" stroke="#2F6FD8" stroke-width="2"/><rect x="2" y="2" width="28" height="5" fill="url(#fti)"/>
<path d="M21 10 Q17 9.5 16 13 L12.5 26 Q11.5 28 8 27.5" stroke="#182848" stroke-width="1.8" fill="none"/><path d="M11.5 15 H19" stroke="#182848" stroke-width="1.8"/></svg>
<div id="t40" class="t" style="left:57.5px;top:720.18px;font-size:22px;line-height:26.4px;font-weight:400;color:#000;font-family:'Liberation Sans',sans-serif;transform:scaleX(0.9476);">sub_10009E0F0</div>
<div class="a" style="left:0px;top:749px;width:8px;height:34px;background:#ECE9D8"></div>
<div class="a" style="left:0px;top:781px;width:8px;height:2px;background:#D0CCBC"></div>
<div class="a" style="left:6px;top:751px;width:2px;height:28px;background:#CBC7B8"></div>
<svg style="left:14px;top:749px" width="32" height="32" viewBox="0 0 32 32"><rect x="1" y="1" width="30" height="30" fill="#E6FAFF" stroke="#2F6FD8" stroke-width="2"/><rect x="2" y="2" width="28" height="5" fill="url(#fti)"/>
<path d="M21 10 Q17 9.5 16 13 L12.5 26 Q11.5 28 8 27.5" stroke="#182848" stroke-width="1.8" fill="none"/><path d="M11.5 15 H19" stroke="#182848" stroke-width="1.8"/></svg>
<div id="t41" class="t" style="left:57.5px;top:754.18px;font-size:22px;line-height:26.4px;font-weight:700;color:#000;font-family:'Liberation Sans',sans-serif;transform:scaleX(1.0854);">-[WindowController exec]</div>
<div class="a" style="left:0px;top:783px;width:8px;height:34px;background:#ECE9D8"></div>
<div class="a" style="left:0px;top:815px;width:8px;height:2px;background:#D0CCBC"></div>
<div class="a" style="left:6px;top:785px;width:2px;height:28px;background:#CBC7B8"></div>
<svg style="left:14px;top:783px" width="32" height="32" viewBox="0 0 32 32"><rect x="1" y="1" width="30" height="30" fill="#E6FAFF" stroke="#2F6FD8" stroke-width="2"/><rect x="2" y="2" width="28" height="5" fill="url(#fti)"/>
<path d="M21 10 Q17 9.5 16 13 L12.5 26 Q11.5 28 8 27.5" stroke="#182848" stroke-width="1.8" fill="none"/><path d="M11.5 15 H19" stroke="#182848" stroke-width="1.8"/></svg>
<div id="t42" class="t" style="left:57.5px;top:788.18px;font-size:22px;line-height:26.4px;font-weight:700;color:#000;font-family:'Liberation Sans',sans-serif;transform:scaleX(1.0736);">-[WindowController trialButtonPressed:]</div>
<div class="a" style="left:8px;top:817px;width:528px;height:34px;background:#ECE9D8"></div>
<div class="a" style="left:0px;top:817px;width:8px;height:34px;background:#ECE9D8"></div>
<div class="a" style="left:0px;top:849px;width:8px;height:2px;background:#D0CCBC"></div>
<div class="a" style="left:6px;top:819px;width:2px;height:28px;background:#CBC7B8"></div>
<svg style="left:14px;top:817px" width="32" height="32" viewBox="0 0 32 32"><rect x="1" y="1" width="30" height="30" fill="#C8DDF4" stroke="#2F6FD8" stroke-width="2"/><rect x="2" y="2" width="28" height="5" fill="url(#fti)"/>
<path d="M21 10 Q17 9.5 16 13 L12.5 26 Q11.5 28 8 27.5" stroke="#182848" stroke-width="1.8" fill="none"/><path d="M11.5 15 H19" stroke="#182848" stroke-width="1.8"/></svg>
<div id="t43" class="t" style="left:57.5px;top:822.18px;font-size:22px;line-height:26.4px;font-weight:700;color:#000;font-family:'Liberation Sans',sans-serif;transform:scaleX(1.0670);">-[WindowController registerButtonPressed:]</div>
<div class="a" style="left:0px;top:851px;width:8px;height:34px;background:#ECE9D8"></div>
<div class="a" style="left:0px;top:883px;width:8px;height:2px;background:#D0CCBC"></div>
<div class="a" style="left:6px;top:853px;width:2px;height:28px;background:#CBC7B8"></div>
<svg style="left:14px;top:851px" width="32" height="32" viewBox="0 0 32 32"><rect x="1" y="1" width="30" height="30" fill="#E6FAFF" stroke="#2F6FD8" stroke-width="2"/><rect x="2" y="2" width="28" height="5" fill="url(#fti)"/>
<path d="M21 10 Q17 9.5 16 13 L12.5 26 Q11.5 28 8 27.5" stroke="#182848" stroke-width="1.8" fill="none"/><path d="M11.5 15 H19" stroke="#182848" stroke-width="1.8"/></svg>
<div id="t44" class="t" style="left:57.5px;top:856.18px;font-size:22px;line-height:26.4px;font-weight:400;color:#000;font-family:'Liberation Sans',sans-serif;transform:scaleX(0.9891);">ked_doActivate</div>
<div class="a" style="left:0px;top:885px;width:8px;height:34px;background:#ECE9D8"></div>
<div class="a" style="left:0px;top:917px;width:8px;height:2px;background:#D0CCBC"></div>
<div class="a" style="left:6px;top:887px;width:2px;height:28px;background:#CBC7B8"></div>
<svg style="left:14px;top:885px" width="32" height="32" viewBox="0 0 32 32"><rect x="1" y="1" width="30" height="30" fill="#E6FAFF" stroke="#2F6FD8" stroke-width="2"/><rect x="2" y="2" width="28" height="5" fill="url(#fti)"/>
<path d="M21 10 Q17 9.5 16 13 L12.5 26 Q11.5 28 8 27.5" stroke="#182848" stroke-width="1.8" fill="none"/><path d="M11.5 15 H19" stroke="#182848" stroke-width="1.8"/></svg>
<div id="t45" class="t" style="left:57.5px;top:890.18px;font-size:22px;line-height:26.4px;font-weight:400;color:#000;font-family:'Liberation Sans',sans-serif;transform:scaleX(0.9441);">sub_10009E461</div>
<div class="a" style="left:0px;top:919px;width:8px;height:34px;background:#ECE9D8"></div>
<div class="a" style="left:0px;top:951px;width:8px;height:2px;background:#D0CCBC"></div>
<div class="a" style="left:6px;top:921px;width:2px;height:28px;background:#CBC7B8"></div>
<svg style="left:14px;top:919px" width="32" height="32" viewBox="0 0 32 32"><rect x="1" y="1" width="30" height="30" fill="#E6FAFF" stroke="#2F6FD8" stroke-width="2"/><rect x="2" y="2" width="28" height="5" fill="url(#fti)"/>
<path d="M21 10 Q17 9.5 16 13 L12.5 26 Q11.5 28 8 27.5" stroke="#182848" stroke-width="1.8" fill="none"/><path d="M11.5 15 H19" stroke="#182848" stroke-width="1.8"/></svg>
<div id="t46" class="t" style="left:57.5px;top:924.18px;font-size:22px;line-height:26.4px;font-weight:400;color:#000;font-family:'Liberation Sans',sans-serif;transform:scaleX(0.9515);">sub_10009E477</div>
<div class="a" style="left:0px;top:953px;width:8px;height:34px;background:#ECE9D8"></div>
<div class="a" style="left:0px;top:985px;width:8px;height:2px;background:#D0CCBC"></div>
<div class="a" style="left:6px;top:955px;width:2px;height:28px;background:#CBC7B8"></div>
<svg style="left:14px;top:953px" width="32" height="32" viewBox="0 0 32 32"><rect x="1" y="1" width="30" height="30" fill="#E6FAFF" stroke="#2F6FD8" stroke-width="2"/><rect x="2" y="2" width="28" height="5" fill="url(#fti)"/>
<path d="M21 10 Q17 9.5 16 13 L12.5 26 Q11.5 28 8 27.5" stroke="#182848" stroke-width="1.8" fill="none"/><path d="M11.5 15 H19" stroke="#182848" stroke-width="1.8"/></svg>
<div id="t47" class="t" style="left:57.5px;top:958.18px;font-size:22px;line-height:26.4px;font-weight:400;color:#000;font-family:'Liberation Sans',sans-serif;transform:scaleX(0.9515);">sub_10009E486</div>
</div>
<div class="a" style="left:538px;top:300px;width:34px;height:1022px;background:linear-gradient(to right,#EEEDE5,#F6F5F0 40%,#FCFCF8)"></div>
<div class="a" style="left:541px;top:302px;width:28px;height:28px;background:linear-gradient(135deg,#DDE6FD 0%,#C2D3FB 50%,#B0C6F7 100%);border:1px solid #fff;border-radius:3px;box-shadow:0 1px 0 #8FAAE0"></div>
<svg style="left:0;top:0" width="2880" height="1800"><path d="M547.0 320.0 L555.0 312.0 L563.0 320.0" stroke="#4D6185" stroke-width="4" fill="none"/></svg>
<div class="a" style="left:541px;top:1290px;width:28px;height:29px;background:linear-gradient(135deg,#DDE6FD 0%,#C2D3FB 50%,#B0C6F7 100%);border:1px solid #fff;border-radius:3px;box-shadow:0 1px 0 #8FAAE0"></div>
<svg style="left:0;top:0" width="2880" height="1800"><path d="M547.0 1300.5 L555.0 1308.5 L563.0 1300.5" stroke="#4D6185" stroke-width="4" fill="none"/></svg>
<div class="a" style="left:541px;top:600px;width:28px;height:40px;background:linear-gradient(to right,#CAD8FC,#B7CBFA 60%,#A9C0F6);border:1px solid #fff;border-radius:3px;box-shadow:0 0 0 1px #A6BDEE"></div>
<div class="a" style="left:2px;top:1322px;width:536px;height:33px;background:linear-gradient(to bottom,#EEEDE5,#F6F5F0 40%,#FCFCF8)"></div>
<div class="a" style="left:4px;top:1326px;width:29px;height:28px;background:linear-gradient(135deg,#DDE6FD 0%,#C2D3FB 50%,#B0C6F7 100%);border:1px solid #fff;border-radius:3px;box-shadow:0 1px 0 #8FAAE0"></div>
<svg style="left:0;top:0" width="2880" height="1800"><path d="M22.5 1332.0 L14.5 1340.0 L22.5 1348.0" stroke="#4D6185" stroke-width="4" fill="none"/></svg>
<div class="a" style="left:37px;top:1326px;width:128px;height:28px;background:linear-gradient(to bottom,#CAD8FC,#B7CBFA 60%,#A9C0F6);border:1px solid #fff;border-radius:3px;box-shadow:0 0 0 1px #A6BDEE"></div>
<div class="a" style="left:95.0px;top:1333.0px;width:1px;height:14px;background:#EEF4FF"></div>
<div class="a" style="left:98.0px;top:1333.0px;width:1px;height:14px;background:#EEF4FF"></div>
<div class="a" style="left:101.0px;top:1333.0px;width:1px;height:14px;background:#EEF4FF"></div>
<div class="a" style="left:104.0px;top:1333.0px;width:1px;height:14px;background:#EEF4FF"></div>
<div class="a" style="left:506px;top:1326px;width:30px;height:28px;background:linear-gradient(135deg,#DDE6FD 0%,#C2D3FB 50%,#B0C6F7 100%);border:1px solid #fff;border-radius:3px;box-shadow:0 1px 0 #8FAAE0"></div>
<svg style="left:0;top:0" width="2880" height="1800"><path d="M517.0 1332.0 L525.0 1340.0 L517.0 1348.0" stroke="#4D6185" stroke-width="4" fill="none"/></svg>
<div class="a" style="left:538px;top:1322px;width:34px;height:33px;background:#ECE9D8"></div>
<div id="t48" class="t" style="left:11px;top:1362.18px;font-size:22px;line-height:26.4px;font-weight:400;color:#000;font-family:'Liberation Sans',sans-serif;transform:scaleX(0.9650);">Line 2813 of 9379</div>
<div class="a" style="left:580px;top:298px;width:2300px;height:2px;background:#ACA899"></div>
<div class="a" style="left:584px;top:257px;width:453px;height:41px;background:linear-gradient(to bottom,#FEFEFE,#F4F3EE 60%,#ECEBE5);border:2px solid #91A7B4;border-bottom:none;border-radius:5px 5px 0 0"></div>
<div class="a" style="left:1503px;top:257px;width:454px;height:41px;background:linear-gradient(to bottom,#FEFEFE,#F4F3EE 60%,#ECEBE5);border:2px solid #91A7B4;border-bottom:none;border-radius:5px 5px 0 0"></div>
<div class="a" style="left:1961px;top:257px;width:452px;height:41px;background:linear-gradient(to bottom,#FEFEFE,#F4F3EE 60%,#ECEBE5);border:2px solid #91A7B4;border-bottom:none;border-radius:5px 5px 0 0"></div>
<div class="a" style="left:1037px;top:252px;width:466px;height:48px;background:#FCFCFE;border-left:2px solid #919B9C;border-right:2px solid #919B9C;border-radius:4px 4px 0 0"></div>
<div class="a" style="left:1037px;top:252px;width:466px;height:3px;background:#E68B2C;border-radius:3px 3px 0 0"></div>
<div class="a" style="left:1037px;top:255px;width:466px;height:4px;background:#FFC73C"></div>
<svg style="left:604px;top:260px" width="32" height="32" viewBox="0 0 32 32"><rect x="1" y="1" width="28" height="28" fill="#F0F6FF" stroke="#2F6FD8" stroke-width="2"/><rect x="2" y="2" width="26" height="5" fill="#3A82E8"/><text x="15" y="25" font-family="Liberation Mono" font-weight="bold" font-size="17" text-anchor="middle" fill="#2A8A20">‘s’</text></svg>
<div id="t49" class="t" style="left:737px;top:265.18px;font-size:22px;line-height:26.4px;font-weight:400;color:#000;font-family:'Liberation Sans',sans-serif;transform:scaleX(0.9665);">Strings window</div>
<div class="a" style="left:984px;top:264px;width:28px;height:28px;background:#C4C0B0;border:2px solid #A8A496;border-radius:4px"></div>
<svg style="left:984px;top:264px" width="28" height="28" viewBox="0 0 28 28"><path d="M8 8 L20 20 M20 8 L8 20" stroke="#F0EEE4" stroke-width="4"/></svg>
<svg style="left:1064px;top:258px" width="32" height="32" viewBox="0 0 32 32"><rect x="1" y="1" width="22" height="24" fill="#E8F2FF" stroke="#2F6FD8" stroke-width="2"/><rect x="2" y="2" width="20" height="4" fill="#3A82E8"/><rect x="9" y="8" width="22" height="23" fill="#F4F8FF" stroke="#1F4F98" stroke-width="2"/><path d="M14 14 H27 M14 19 H27 M14 24 H27" stroke="#506080" stroke-width="2"/></svg>
<div id="t50" class="t" style="left:1216px;top:262.58px;font-size:22px;line-height:26.4px;font-weight:400;color:#000;font-family:'Liberation Sans',sans-serif;transform:scaleX(0.9562);">IDA View-A</div>
<div class="a" style="left:1445px;top:262px;width:28px;height:28px;background:linear-gradient(135deg,#F0A080,#E06A4A);border:2px solid #D0402A;border-radius:4px"></div>
<svg style="left:1445px;top:262px" width="28" height="28" viewBox="0 0 28 28"><path d="M8 8 L20 20 M20 8 L8 20" stroke="#fff" stroke-width="4"/></svg>
<svg style="left:1524px;top:260px" width="32" height="32" viewBox="0 0 32 32"><rect x="1" y="1" width="26" height="24" fill="#E8F2FF" stroke="#2F6FD8" stroke-width="2"/><rect x="2" y="2" width="24" height="4" fill="#3A82E8"/><rect x="9" y="9" width="22" height="22" fill="#F4F8FF" stroke="#1F4F98" stroke-width="2"/><path d="M14 15 H27 M14 20 H27 M14 25 H27" stroke="#1030C0" stroke-width="2"/><path d="M2 14 L10 9 L10 12 L15 12 L15 16 L10 16 L10 19 Z" fill="#20A020"/></svg>
<div id="t51" class="t" style="left:1691.5px;top:265.18px;font-size:22px;line-height:26.4px;font-weight:400;color:#000;font-family:'Liberation Sans',sans-serif;transform:scaleX(1.0019);">Imports</div>
<div class="a" style="left:1903px;top:264px;width:28px;height:28px;background:#C4C0B0;border:2px solid #A8A496;border-radius:4px"></div>
<svg style="left:1903px;top:264px" width="28" height="28" viewBox="0 0 28 28"><path d="M8 8 L20 20 M20 8 L8 20" stroke="#F0EEE4" stroke-width="4"/></svg>
<svg style="left:1984px;top:260px" width="32" height="32" viewBox="0 0 32 32"><rect x="7" y="1" width="24" height="24" fill="#E8F2FF" stroke="#2F6FD8" stroke-width="2"/><rect x="8" y="2" width="22" height="4" fill="#3A82E8"/><rect x="1" y="9" width="20" height="22" fill="#F4F8FF" stroke="#1F4F98" stroke-width="2"/><path d="M5 15 H15 M5 20 H15 M5 25 H15" stroke="#1030C0" stroke-width="2"/><path d="M28 12 L20 7 L20 10 L14 10 L14 14 L20 14 L20 17 Z" fill="#20A020"/></svg>
<div id="t52" class="t" style="left:2152px;top:265.18px;font-size:22px;line-height:26.4px;font-weight:400;color:#000;font-family:'Liberation Sans',sans-serif;transform:scaleX(0.9733);">Exports</div>
<div class="a" style="left:2364px;top:264px;width:28px;height:28px;background:#C4C0B0;border:2px solid #A8A496;border-radius:4px"></div>
<svg style="left:2364px;top:264px" width="28" height="28" viewBox="0 0 28 28"><path d="M8 8 L20 20 M20 8 L8 20" stroke="#F0EEE4" stroke-width="4"/></svg>
<div class="a" style="left:580px;top:300px;width:150px;height:1094px;background:#fff"></div>
<div class="a" style="left:730px;top:300px;width:10px;height:1094px;background:#ECE9D8"></div>
<div class="a" style="left:740px;top:300px;width:2140px;height:1093px;border:2px solid #7F9DB9;background:#fff"></div>
<div class="a" style="left:710px;top:304px;width:12px;height:12px;background:#5BC8F8;border-radius:50%"></div>
<div class="a" style="left:710px;top:368px;width:12px;height:12px;background:#5BC8F8;border-radius:50%"></div>
<div class="a" style="left:710px;top:432px;width:12px;height:12px;background:#5BC8F8;border-radius:50%"></div>
<div class="a" style="left:710px;top:848px;width:12px;height:12px;background:#5BC8F8;border-radius:50%"></div>
<div class="a" style="left:710px;top:912px;width:12px;height:12px;background:#5BC8F8;border-radius:50%"></div>
<div class="a" style="left:710px;top:976px;width:12px;height:12px;background:#5BC8F8;border-radius:50%"></div>
<div class="a" style="left:710px;top:1008px;width:12px;height:12px;background:#5BC8F8;border-radius:50%"></div>
<div class="a" style="left:710px;top:1040px;width:12px;height:12px;background:#5BC8F8;border-radius:50%"></div>
<div class="a" style="left:710px;top:1072px;width:12px;height:12px;background:#5BC8F8;border-radius:50%"></div>
<div class="a" style="left:710px;top:1104px;width:12px;height:12px;background:#5BC8F8;border-radius:50%"></div>
<div class="a" style="left:710px;top:1136px;width:12px;height:12px;background:#5BC8F8;border-radius:50%"></div>
<div class="a" style="left:710px;top:1168px;width:12px;height:12px;background:#5BC8F8;border-radius:50%"></div>
<div class="a" style="left:710px;top:1232px;width:12px;height:12px;background:#5BC8F8;border-radius:50%"></div>
<div class="a" style="left:742px;top:302px;width:2102px;height:1018px;overflow:hidden">
<div class="m" style="left:0;top:1px"><span class="g">__objc_methname:000000010023CA54</span><span class="b"> sel_refresh_</span><span class="k">   </span><span class="n"> db </span><span class="n">'</span><span class="s">refresh:</span><span class="n">'</span><span class="n">,</span><span class="s">0</span><span class="k">         </span><span class="x">; DATA XREF: __objc_const:000000010029A2F0<span class="dn"> </span>o</span></div>
<div class="m" style="left:0;top:33px"><span class="g">__objc_methname:000000010023CA54</span><span class="k">                                         </span><span class="x">; __objc_selrefs:selRef_refresh_<span class="dn"> </span>o</span></div>
<div class="m" style="left:0;top:65px"><span class="g">__objc_methname:000000010023CA5D</span><span class="b"> sel_continue</span><span class="k">   </span><span class="n"> db </span><span class="n">'</span><span class="s">continue</span><span class="n">'</span><span class="n">,</span><span class="s">0</span><span class="k">         </span><span class="x">; DATA XREF: __objc_const:000000010029A350<span class="dn"> </span>o</span></div>
<div class="m" style="left:0;top:97px"><span class="g">__objc_methname:000000010023CA5D</span><span class="k">                                         </span><span class="x">; __objc_selrefs:selRef_continue<span class="dn"> </span>o</span></div>
<div class="m" style="left:0;top:129px"><span class="g">__objc_methname:000000010023CA66</span><span class="b"> sel_registerButtonPressed_</span><span class="k"></span><span class="n"> db </span><span class="n">'</span><span class="s">registerButtonPressed:</span><span class="n">'</span><span class="n">,</span><span class="s">0</span></div>
<div class="m" style="left:0;top:161px"><span class="b">__objc_methname:000000010023CA66</span><span class="k">                                         </span><span class="x">; DATA XREF: __objc_const:</span><span class="x hl">000000010029A338</span><span class="x"><span class="dn"> </span>o</span></div>
<div class="m" style="left:0;top:193px"><span class="g">__objc_methname:000000010023CA66</span><span class="k">                                         </span><span class="x">; __objc_selrefs:selRef_registerButtonPressed_<span class="dn"> </span>o</span></div>
<div class="m" style="left:0;top:225px"><span class="g">__objc_methname:000000010023CA7D</span><span class="b"> sel_trialButtonPressed_</span><span class="k"></span><span class="n"> db </span><span class="n">'</span><span class="s">trialButtonPressed:</span><span class="n">'</span><span class="n">,</span><span class="s">0</span></div>
<div class="m" style="left:0;top:257px"><span class="g">__objc_methname:000000010023CA7D</span><span class="k">                                         </span><span class="x">; DATA XREF: __objc_const:000000010029A320<span class="dn"> </span>o</span></div>
<div class="m" style="left:0;top:289px"><span class="g">__objc_methname:000000010023CA90</span><span class="n"> a_v24@0_0_16</span><span class="k">   </span><span class="n"> db </span><span class="n">'</span><span class="s">v24@0:8@16</span><span class="n">'</span><span class="n">,</span><span class="s">0</span><span class="k">       </span><span class="x">; DATA XREF: __objc_const:000000010029A368<span class="dn"> </span>o</span></div>
<div class="m" style="left:0;top:321px"><span class="g">__objc_methname:000000010023CA9B</span><span class="b"> sel_exec</span><span class="k">       </span><span class="n"> db </span><span class="n">'</span><span class="s">exec</span><span class="n">'</span><span class="n">,</span><span class="s">0</span><span class="k">             </span><span class="x">; DATA XREF: __objc_const:000000010029A380<span class="dn"> </span>o</span></div>
<div class="m" style="left:0;top:353px"><span class="g">__objc_methname:000000010023CAA0</span><span class="n"> a_windowcontro</span><span class="k"> </span><span class="n"> db </span><span class="n">'</span><span class="s">_WindowController</span><span class="n">'</span><span class="n">,</span><span class="s">0</span><span class="k"></span><span class="x">; DATA XREF: __objc_const:000000010029A398<span class="dn"> </span>o</span></div>
<div class="m" style="left:0;top:385px"><span class="g">__objc_methname:000000010023CAB2</span><span class="n"> a_registration</span><span class="k"> </span><span class="n"> db </span><span class="n">'</span><span class="s">_registrationView</span><span class="n">'</span><span class="n">,</span><span class="s">0</span><span class="k"></span><span class="x">; DATA XREF: __objc_const:000000010029A3D0<span class="dn"> </span>o</span></div>
<div class="m" style="left:0;top:417px"><span class="g">__objc_methname:000000010023CAB2</span><span class="n"> a_registrview</span><span class="k">  </span><span class="n"> db </span><span class="n">'</span><span class="s">_registView</span><span class="n">'</span><span class="n">,</span><span class="s">0</span></div>
<div class="m" style="left:0;top:449px"><span class="g">__objc_methname:000000010023CAC4</span><span class="n"> a_trialbutton</span><span class="k">  </span><span class="n"> db </span><span class="n">'</span><span class="s">_trialButton</span><span class="n">'</span><span class="n">,</span><span class="s">0</span><span class="k">     </span><span class="x">; DATA XREF: __objc_const:000000010029A3F0<span class="dn"> </span>o</span></div>
<div class="m" style="left:0;top:481px"><span class="g">__objc_methname:000000010023CAC4</span><span class="n"> a_trialbutt</span><span class="k">    </span><span class="n"> db </span><span class="n">'</span><span class="s">_trialButt</span><span class="n">'</span><span class="n">,</span><span class="s">0</span></div>
<div class="m" style="left:0;top:513px"><span class="g">__objc_methname:000000010023CAD1</span><span class="n"> a_registerbutt</span><span class="k"> </span><span class="n"> db </span><span class="n">'</span><span class="s">_registerButton</span><span class="n">'</span><span class="n">,</span><span class="s">0</span><span class="k">  </span><span class="x">; DATA XREF: __objc_const:000000010029A410<span class="dn"> </span>o</span></div>
<div class="m" style="left:0;top:545px"><span class="g">__objc_methname:000000010023CAEF</span><span class="n"> a_registratio_0</span><span class="k"></span><span class="n"> db </span><span class="n">'</span><span class="s">_registrationButtonBackground</span><span class="n">'</span><span class="n">,</span><span class="s">0</span></div>
<div class="m" style="left:0;top:577px"><span class="g">__objc_methname:000000010023CAEF</span><span class="k">                                         </span><span class="x">; DATA XREF: __objc_const:000000010029A430<span class="dn"> </span>o</span></div>
<div class="m" style="left:0;top:609px"><span class="g">__objc_methname:000000010023CB0D</span><span class="n"> a_registerbackg</span><span class="k"></span><span class="n"> db </span><span class="n">'</span><span class="s">_registerBackground</span><span class="n">'</span><span class="n">,</span><span class="s">0</span></div>
<div class="m" style="left:0;top:641px"><span class="g">__objc_methname:000000010023CB0D</span><span class="k">                                         </span><span class="x">; DATA XREF: __objc_const:000000010029A450<span class="dn"> </span>o</span></div>
<div class="m" style="left:0;top:673px"><span class="g">__objc_methname:000000010023CB21</span><span class="n"> a_triallabel</span><span class="k">   </span><span class="n"> db </span><span class="n">'</span><span class="s">_trialLabel</span><span class="n">'</span><span class="n">,</span><span class="s">0</span><span class="k">      </span><span class="x">; DATA XREF: __objc_const:000000010029A470<span class="dn"> </span>o</span></div>
<div class="m" style="left:0;top:705px"><span class="g">__objc_methname:000000010023CB2D</span><span class="n"> a_emailtextfiel</span><span class="k"></span><span class="n"> db </span><span class="n">'</span><span class="s">_emailTextField</span><span class="n">'</span><span class="n">,</span><span class="s">0</span><span class="k">  </span><span class="x">; DATA XREF: __objc_const:000000010029A490<span class="dn"> </span>o</span></div>
<div class="m" style="left:0;top:737px"><span class="g">__objc_methname:000000010023CB3D</span><span class="n"> a_keytextfield</span><span class="k"> </span><span class="n"> db </span><span class="n">'</span><span class="s">_keyTextField</span><span class="n">'</span><span class="n">,</span><span class="s">0</span><span class="k">    </span><span class="x">; DATA XREF: __objc_const:000000010029A4B0<span class="dn"> </span>o</span></div>
<div class="m" style="left:0;top:769px"><span class="g">__objc_methname:000000010023CB4B</span><span class="n"> a_registerlabel</span><span class="k"></span><span class="n"> db </span><span class="n">'</span><span class="s">_registerLabel</span><span class="n">'</span><span class="n">,</span><span class="s">0</span><span class="k">   </span><span class="x">; DATA XREF: __objc_const:000000010029A4D0<span class="dn"> </span>o</span></div>
<div class="m" style="left:0;top:801px"><span class="g">__objc_methname:000000010023CB5A</span><span class="n"> a_registerview</span><span class="k"> </span><span class="n"> db </span><span class="n">'</span><span class="s">_registerView</span><span class="n">'</span><span class="n">,</span><span class="s">0</span><span class="k">    </span><span class="x">; DATA XREF: __objc_const:000000010029A4F0<span class="dn"> </span>o</span></div>
<div class="m" style="left:0;top:833px"><span class="g">__objc_methname:000000010023CB68</span><span class="n"> a_selectview</span><span class="k">   </span><span class="n"> db </span><span class="n">'</span><span class="s">_selectView</span><span class="n">'</span><span class="n">,</span><span class="s">0</span><span class="k">      </span><span class="x">; DATA XREF: __objc_const:000000010029A510<span class="dn"> </span>o</span></div>
<div class="m" style="left:0;top:865px"><span class="g">__objc_methname:000000010023CB74</span><span class="b"> sel_stringByDeletingLastPathComponent</span><span class="k"></span><span class="n"> db </span><span class="n">'</span><span class="s">stringByDeletingLastPathComponent</span><span class="n">'</span><span class="n">,</span><span class="s">0</span></div>
<div class="m" style="left:0;top:897px"><span class="g">__objc_methname:000000010023CB74</span><span class="k">                                         </span><span class="x">; DATA XREF: __objc_selrefs:selRef_stringByDeletingLastPathComponent<span class="dn"> </span>o</span></div>
<div class="m" style="left:0;top:929px"><span class="g">__objc_methname:000000010023CB96</span><span class="b"> sel_bundleWithPath_</span><span class="k"></span><span class="n"> db </span><span class="n">'</span><span class="s">bundleWithPath:</span><span class="n">'</span><span class="n">,</span><span class="s">0</span></div>
<div class="m" style="left:0;top:961px"><span class="g">__objc_methname:000000010023CB96</span><span class="k">                                         </span><span class="x">; DATA XREF: __objc_selrefs:selRef_bundleWithPath_<span class="dn"> </span>o</span></div>
</div>
<div class="a" style="left:742px;top:1320px;width:2102px;height:40px;background:#ECE9D8"></div>
<div id="t53" class="t" style="left:745px;top:1325.67px;font-size:23px;line-height:27.6px;font-weight:400;color:#000;font-family:'Liberation Mono',monospace;transform:scaleX(0.9871);">0023CA66</div>
<div class="a" style="left:857px;top:1326px;width:2px;height:28px;background:#C5C2B2"></div>
<div id="t54" class="t" style="left:869px;top:1325.67px;font-size:23px;line-height:27.6px;font-weight:400;color:#000;font-family:'Liberation Mono',monospace;transform:scaleX(1.0125);">000000010023CA66: __objc_methname:sel_registerButtonPressed_</div>
<div class="a" style="left:1709px;top:1326px;width:2px;height:28px;background:#C5C2B2"></div>
<div class="a" style="left:1736px;top:1326px;width:2px;height:28px;background:#C5C2B2"></div>
<div class="a" style="left:2844px;top:302px;width:33px;height:1055px;background:linear-gradient(to right,#EEEDE5,#F6F5F0 40%,#FCFCF8)"></div>
<div class="a" style="left:2847px;top:304px;width:27px;height:28px;background:linear-gradient(135deg,#DDE6FD 0%,#C2D3FB 50%,#B0C6F7 100%);border:1px solid #fff;border-radius:3px;box-shadow:0 1px 0 #8FAAE0"></div>
<svg style="left:0;top:0" width="2880" height="1800"><path d="M2852.5 322.0 L2860.5 314.0 L2868.5 322.0" stroke="#4D6185" stroke-width="4" fill="none"/></svg>
<div class="a" style="left:2847px;top:1130px;width:27px;height:15px;background:linear-gradient(to right,#CAD8FC,#B7CBFA 60%,#A9C0F6);border:1px solid #fff;border-radius:3px;box-shadow:0 0 0 1px #A6BDEE"></div>
<div class="a" style="left:2847px;top:1326px;width:27px;height:30px;background:linear-gradient(135deg,#DDE6FD 0%,#C2D3FB 50%,#B0C6F7 100%);border:1px solid #fff;border-radius:3px;box-shadow:0 1px 0 #8FAAE0"></div>
<svg style="left:0;top:0" width="2880" height="1800"><path d="M2852.5 1337.0 L2860.5 1345.0 L2868.5 1337.0" stroke="#4D6185" stroke-width="4" fill="none"/></svg>
<div class="a" style="left:742px;top:1360px;width:2102px;height:31px;background:linear-gradient(to bottom,#EEEDE5,#F6F5F0 40%,#FCFCF8)"></div>
<div class="a" style="left:744px;top:1362px;width:29px;height:28px;background:linear-gradient(135deg,#DDE6FD 0%,#C2D3FB 50%,#B0C6F7 100%);border:1px solid #fff;border-radius:3px;box-shadow:0 1px 0 #8FAAE0"></div>
<svg style="left:0;top:0" width="2880" height="1800"><path d="M762.5 1368.0 L754.5 1376.0 L762.5 1384.0" stroke="#4D6185" stroke-width="4" fill="none"/></svg>
<div class="a" style="left:776px;top:1362px;width:881px;height:28px;background:linear-gradient(to bottom,#CAD8FC,#B7CBFA 60%,#A9C0F6);border:1px solid #fff;border-radius:3px;box-shadow:0 0 0 1px #A6BDEE"></div>
<div class="a" style="left:1210.5px;top:1369.0px;width:1px;height:14px;background:#EEF4FF"></div>
<div class="a" style="left:1213.5px;top:1369.0px;width:1px;height:14px;background:#EEF4FF"></div>
<div class="a" style="left:1216.5px;top:1369.0px;width:1px;height:14px;background:#EEF4FF"></div>
<div class="a" style="left:1219.5px;top:1369.0px;width:1px;height:14px;background:#EEF4FF"></div>
<div class="a" style="left:2812px;top:1361px;width:29px;height:29px;background:linear-gradient(135deg,#DDE6FD 0%,#C2D3FB 50%,#B0C6F7 100%);border:1px solid #fff;border-radius:3px;box-shadow:0 1px 0 #8FAAE0"></div>
<svg style="left:0;top:0" width="2880" height="1800"><path d="M2822.5 1367.5 L2830.5 1375.5 L2822.5 1383.5" stroke="#4D6185" stroke-width="4" fill="none"/></svg>
<div class="a" style="left:2844px;top:1357px;width:33px;height:34px;background:#ECE9D8"></div>
<div class="a" style="left:160px;top:518px;width:2232px;height:328px;background:#FFFFE1;border:2px solid #EAE6D2;box-shadow:4px 4px 0 rgba(0,0,0,0.18),6px 6px 0 rgba(0,0,0,0.17),8px 8px 0 rgba(0,0,0,0.12)"></div>
<div class="a" style="left:161px;top:520px;width:2230px;height:324px;overflow:hidden">
<div class="m" style="left:1px;top:1px"><span class="k">                </span><span class="b">__objc2_meth</span><span class="n"> &lt;offset </span><span class="b">sel_windowDidLoad</span><span class="n">, offset aV16@08, \ </span><span class="g">; WindowController - (void)windowDidLoad</span></div>
<div class="m" style="left:1px;top:33px"><span class="k">                              </span><span class="n">offset </span><span class="b">__WindowController_windowDidLoad_</span><span class="n">&gt;</span></div>
<div class="m" style="left:1px;top:65px"><span class="k">                </span><span class="b">__objc2_meth</span><span class="n"> &lt;offset </span><span class="b">sel_refresh_</span><span class="n">, offset aV24@08@?16, \ </span><span class="g">; WindowController - (void)refresh:(id)</span></div>
<div class="m" style="left:1px;top:97px"><span class="k">                              </span><span class="n">offset </span><span class="b">__WindowController_refresh__</span><span class="n">&gt;</span></div>
<div class="m" style="left:1px;top:129px"><span class="k">                </span><span class="b">__objc2_meth</span><span class="n"> &lt;offset </span><span class="b">sel_exec</span><span class="n">, offset aV16@08, \ </span><span class="g">; WindowController - (void)exec</span></div>
<div class="m" style="left:1px;top:161px"><span class="k">                              </span><span class="n">offset </span><span class="b">__WindowController_exec_</span><span class="n">&gt;</span></div>
<div class="m" style="left:1px;top:193px"><span class="k">                </span><span class="b">__objc2_meth</span><span class="n"> &lt;offset aTrialbuttonpre, offset aV24@08@16, \ </span><span class="g">; WindowController - (void)trialButtonPressed:(id)</span></div>
<div class="m" style="left:1px;top:225px"><span class="k">                              </span><span class="n">offset </span><span class="b">__WindowController_trialButtonPressed__</span><span class="n">&gt;</span></div>
<div class="m" style="left:1px;top:257px"><span class="k">                </span><span class="b">__objc2_meth</span><span class="n"> &lt;offset </span><span class="b">sel_registerButtonPressed_</span><span class="n">, offset aV24@08@16, \ </span><span class="g">; WindowController - (void)registerButtonPressed:(id)</span></div>
<div class="m" style="left:1px;top:289px"><span class="k">                              </span><span class="n">offset </span><span class="b">__WindowController_registerButtonPressed__</span><span class="n">&gt;</span></div>
</div>
<div class="a" style="left:0px;top:1403px;width:2878px;height:39px;border:2px solid #ACA899;background:#ECE9D8"></div>
<svg style="left:12px;top:1406px" width="32" height="32" viewBox="0 0 32 32"><rect x="1" y="1" width="26" height="28" fill="#F0F6FF" stroke="#4F7FC8" stroke-width="2"/><rect x="2" y="2" width="24" height="5" fill="#3A82E8"/><path d="M6 13 H22 M6 17 H22 M6 21 H22 M6 25 H22" stroke="#405070" stroke-width="2"/></svg>
<div id="t55" class="t" style="left:51.5px;top:1408.18px;font-size:22px;line-height:26.4px;font-weight:400;color:#000;font-family:'Liberation Sans',sans-serif;transform:scaleX(0.9963);">Output window</div>
<div class="a" style="left:2764px;top:1412px;width:19px;height:18px;border:3px solid #000;border-top-width:4px"></div>
<div class="a" style="left:2811px;top:1412px;width:12px;height:11px;border:2px solid #000;border-top-width:3px"></div>
<div class="a" style="left:2806px;top:1418px;width:12px;height:11px;border:2px solid #000;border-top-width:3px;background:#ECE9D8"></div>
<svg style="left:2845px;top:1413px" width="18" height="16" viewBox="0 0 18 16"><path d="M2 1 L16 15 M16 1 L2 15" stroke="#000" stroke-width="3.5"/></svg>
<div class="a" style="left:0px;top:1446px;width:2878px;height:203px;border:2px solid #7F9DB9;background:#fff"></div>
<div class="a" style="left:2px;top:1448px;width:2845px;height:199px;overflow:hidden">
<div class="m" style="left:9.6px;top:-23px;color:#000">1002523A8: using guessed type int (*_NSConcreteStackBlock_ptr;</div>
<div class="m" style="left:9.6px;top:9px;color:#000">1002523B0: using guessed type int (__fastcall *objc_release_ptr)(_QWORD);</div>
<div class="m" style="left:9.6px;top:41px;color:#000">1002523B8: using guessed type int (__fastcall *objc_retain_ptr)(_QWORD);</div>
<div class="m" style="left:9.6px;top:73px;color:#000">1002AE0B0: using guessed type char *selRef_refresh_;</div>
<div class="m" style="left:9.6px;top:105px;color:#000">Command "JumpOpXref" failed</div>
<div class="m" style="left:9.6px;top:137px;color:#000">Command "JumpOpXref" failed</div>
<div class="m" style="left:9.6px;top:169px;color:#000">Command "ChartXrefsFrom" failed</div>
</div>
<div class="a" style="left:2847px;top:1448px;width:29px;height:199px;background:linear-gradient(to right,#EEEDE5,#F6F5F0 40%,#FCFCF8)"></div>
<div class="a" style="left:2848px;top:1449px;width:27px;height:32px;background:linear-gradient(135deg,#DDE6FD 0%,#C2D3FB 50%,#B0C6F7 100%);border:1px solid #fff;border-radius:3px;box-shadow:0 1px 0 #8FAAE0"></div>
<svg style="left:0;top:0" width="2880" height="1800"><path d="M2853.5 1469.0 L2861.5 1461.0 L2869.5 1469.0" stroke="#4D6185" stroke-width="4" fill="none"/></svg>
<div class="a" style="left:2848px;top:1598px;width:27px;height:13px;background:linear-gradient(to right,#CAD8FC,#B7CBFA 60%,#A9C0F6);border:1px solid #fff;border-radius:3px;box-shadow:0 0 0 1px #A6BDEE"></div>
<div class="a" style="left:2848px;top:1615px;width:27px;height:31px;background:linear-gradient(135deg,#DDE6FD 0%,#C2D3FB 50%,#B0C6F7 100%);border:1px solid #fff;border-radius:3px;box-shadow:0 1px 0 #8FAAE0"></div>
<svg style="left:0;top:0" width="2880" height="1800"><path d="M2853.5 1626.5 L2861.5 1634.5 L2869.5 1626.5" stroke="#4D6185" stroke-width="4" fill="none"/></svg>
<div class="a" style="left:5px;top:1654px;width:91px;height:43px;background:linear-gradient(to bottom,#FFFFFF,#F4F3EE 70%,#D8D5C8);border:2px solid #003C74;border-radius:5px"></div>
<div id="t56" class="t" style="left:31px;top:1662.78px;font-size:22px;line-height:26.4px;font-weight:400;color:#000;font-family:'Liberation Sans',sans-serif;transform:scaleX(0.9237);">IDC</div>
<div class="a" style="left:105px;top:1652px;width:2772px;height:47px;background:#fff;border:2px solid #7F9DB9"></div>
<div id="t57" class="t" style="left:4.3px;top:1710.07px;font-size:23px;line-height:27.6px;font-weight:400;color:#000;font-family:'Liberation Mono',monospace;transform:scaleX(1.0062);">AU:  idle</div>
<div class="a" style="left:159px;top:1710px;width:2px;height:25px;background:#ACA899"></div>
<div class="a" style="left:161px;top:1710px;width:1px;height:25px;background:#fff"></div>
<div id="t58" class="t" style="left:169px;top:1710.07px;font-size:23px;line-height:27.6px;font-weight:400;color:#000;font-family:'Liberation Mono',monospace;transform:scaleX(1.0323);">Down</div>
<div class="a" style="left:312px;top:1710px;width:2px;height:25px;background:#ACA899"></div>
<div class="a" style="left:314px;top:1710px;width:1px;height:25px;background:#fff"></div>
<div id="t59" class="t" style="left:321px;top:1710.07px;font-size:23px;line-height:27.6px;font-weight:400;color:#000;font-family:'Liberation Mono',monospace;transform:scaleX(1.0143);">Disk: 119GB</div>
<div class="a" style="left:479px;top:1710px;width:2px;height:25px;background:#ACA899"></div>
<div class="a" style="left:481px;top:1710px;width:1px;height:25px;background:#fff"></div>
<div class="a" style="left:0px;top:1740px;width:2880px;height:60px;background:linear-gradient(to bottom,#3168D5 0px,#4993E6 2px,#4A90E8 4px,#2B71E0 6px,#245FDC 10px,#245DDA 50px,#1941A5 60px)"></div>
<div class="a" style="left:0px;top:1740px;width:192px;height:60px;background:linear-gradient(to bottom,#2E7E3E 0px,#7DBE84 5px,#5AAA5E 10px,#3C9C44 22px,#3DA644 40px,#359A3C 52px,#2A7A30 60px);border-radius:0 14px 14px 0 / 0 30px 30px 0;box-shadow:inset -5px 0 5px rgba(0,70,0,0.45)"></div>
<svg style="left:21px;top:1751px" width="36" height="34" viewBox="0 0 36 34"><path d="M2 6 Q9 2 16 5 L14 16 Q8 13 1 17 Z" fill="#F05020"/><path d="M18 5 Q25 8 33 4 L31 15 Q24 18 16 16 Z" fill="#40C030"/><path d="M1 19 Q8 15 14 18 L12 30 Q6 27 0 30 Z" fill="#3070F0"/><path d="M16 18 Q23 21 31 17 L29 29 Q22 32 14 29 Z" fill="#F8D020"/></svg>
<div id="t60" class="t" style="left:69px;top:1749.82px;font-size:34px;line-height:40.8px;font-weight:700;color:#fff;font-family:'Liberation Sans',sans-serif;transform:scaleX(1.0176);font-style:italic;text-shadow:2px 2px 1px #1a4a1a">start</div>
<div class="a" style="left:214px;top:1747px;width:316px;height:47px;background:linear-gradient(to bottom,#5A9AF8 0px,#3C81F3 6px,#3A7EF0 40px,#2E6AD8 47px);border-radius:3px"></div>
<div class="a" style="left:532px;top:1747px;width:319px;height:47px;background:#1E52B7;border-radius:3px;box-shadow:inset 1px 1px 2px #0A2A70"></div>
<div class="a" style="left:854px;top:1747px;width:316px;height:47px;background:linear-gradient(to bottom,#5A9AF8 0px,#3C81F3 6px,#3A7EF0 40px,#2E6AD8 47px);border-radius:3px"></div>
<svg style="left:233px;top:1752px" width="30" height="34" viewBox="0 0 30 34"><path d="M2 8 L10 8 L12 5 L22 5 L22 9 L28 9 L25 26 L3 26 Z" fill="#E8B830"/><path d="M5 12 L29 12 L25 26 L2 26 Z" fill="#F8E080"/><rect x="12" y="26" width="6" height="6" fill="#D0A020"/><path d="M2 31 H28" stroke="#C0C0C0" stroke-width="2"/></svg>
<div id="t61" class="t" style="left:271px;top:1758.18px;font-size:22px;line-height:26.4px;font-weight:400;color:#fff;font-family:'Liberation Sans',sans-serif;transform:scaleX(0.9273);">Home on Mac</div>
<svg style="left:552px;top:1752px" width="34" height="36" viewBox="0 0 34 36">
<path d="M7 4 Q12 1 20 2 Q28 4 32 9 L33 20 Q31 26 26 30 L22 31 L20 20 Z" fill="#140a06"/>
<path d="M4 8 Q6 4 12 3 Q18 3 20 9 L20 24 Q18 29 12 29 Q6 27 5 20 Z" fill="#d4a888"/>
<path d="M9 6 Q13 4 16 8 L16 22 Q14 26 11 25 Q8 22 8 15 Z" fill="#efd8c0"/>
<path d="M5 6 Q9 2 16 3 L13 6 Q8 6 6 12 Z" fill="#2a1408"/>
<path d="M13 24 L22 24 L26 29 L32 27 L32 35 L12 35 Z" fill="#d03820"/>
<rect x="17" y="26" width="4" height="3" fill="#f0e0d0"/><rect x="17" y="30" width="4" height="3" fill="#f0e0d0"/>
<rect x="9" y="34" width="24" height="2" fill="#e0b888"/>
</svg>
<div id="t62" class="t" style="left:593.5px;top:1759.18px;font-size:22px;line-height:26.4px;font-weight:400;color:#fff;font-family:'Liberation Sans',sans-serif;transform:scaleX(1.0047);">IDA - \\Mac\Home\Su...</div>
<svg style="left:871px;top:1753px" width="34" height="34" viewBox="0 0 34 34"><rect x="1" y="9" width="20" height="24" fill="#fff" stroke="#808080" stroke-width="2"/><rect x="1" y="31" width="22" height="2" fill="#000"/><path d="M6 17 H14 M6 21 H14 M6 25 H14" stroke="#808080" stroke-width="2"/><path d="M13 10 Q13 2 21 2 Q30 2 30 9 Q30 13 25 16 Q21 18 21 22" stroke="#000" stroke-width="7" fill="none"/><path d="M13 10 Q13 2 21 2 Q30 2 30 9 Q30 13 25 16 Q21 18 21 22" stroke="#FFFF00" stroke-width="4" fill="none"/><rect x="17" y="25" width="8" height="7" fill="#FFFF00" stroke="#000" stroke-width="2"/></svg>
<div id="t63" class="t" style="left:910.7px;top:1759.18px;font-size:22px;line-height:26.4px;font-weight:400;color:#fff;font-family:'Liberation Sans',sans-serif;transform:scaleX(0.9813);">IDA</div>
<div class="a" style="left:2731px;top:1740px;width:149px;height:60px;background:linear-gradient(to bottom,#1AA2F0 0px,#18B8F8 3px,#0F9AE8 8px,#0F93E6 50px,#0D80D8 60px);border-left:2px solid #0A5AB8"></div>
<div class="a" style="left:2583px;top:1755px;width:34px;height:32px;background:#3C6EDC"></div>
<div id="t64" class="t" style="left:2585px;top:1758.18px;font-size:22px;line-height:26.4px;font-weight:400;color:#fff;font-family:'Liberation Sans',sans-serif;transform:scaleX(0.8834);">EN</div>
<svg style="left:2631px;top:1756px" width="28" height="30" viewBox="0 0 28 30"><rect x="1" y="1" width="24" height="24" fill="#FFFF80" stroke="#000" stroke-width="2"/><text x="13" y="21" font-family="Liberation Sans" font-weight="bold" font-size="20" text-anchor="middle" fill="#102080">?</text><path d="M14 25 L14 30 L20 25" fill="#FFFF80" stroke="#000" stroke-width="1.5"/></svg>
<svg style="left:2680px;top:1751px" width="18" height="42" viewBox="0 0 18 42"><rect x="5" y="2" width="11" height="8" fill="none" stroke="#fff" stroke-width="2"/><rect x="1" y="6" width="11" height="8" fill="#245DDA" stroke="#fff" stroke-width="2"/><path d="M4 26 H14 L9 31 Z" fill="#fff"/></svg>
<div class="a" style="left:2712px;top:1751px;width:38px;height:38px;border-radius:50%;background:radial-gradient(circle at 40% 35%,#8FD0FF,#2A8AE8 50%,#1060C0);border:1px solid #0A50A8"></div>
<svg style="left:2722px;top:1758px" width="16" height="24" viewBox="0 0 16 24"><path d="M12 2 L4 12 L12 22" stroke="#fff" stroke-width="4.5" fill="none"/></svg>
<div id="t65" class="t" style="left:2767px;top:1758.18px;font-size:22px;line-height:26.4px;font-weight:400;color:#fff;font-family:'Liberation Sans',sans-serif;transform:scaleX(0.9519);">5:00 PM</div></body></html>
